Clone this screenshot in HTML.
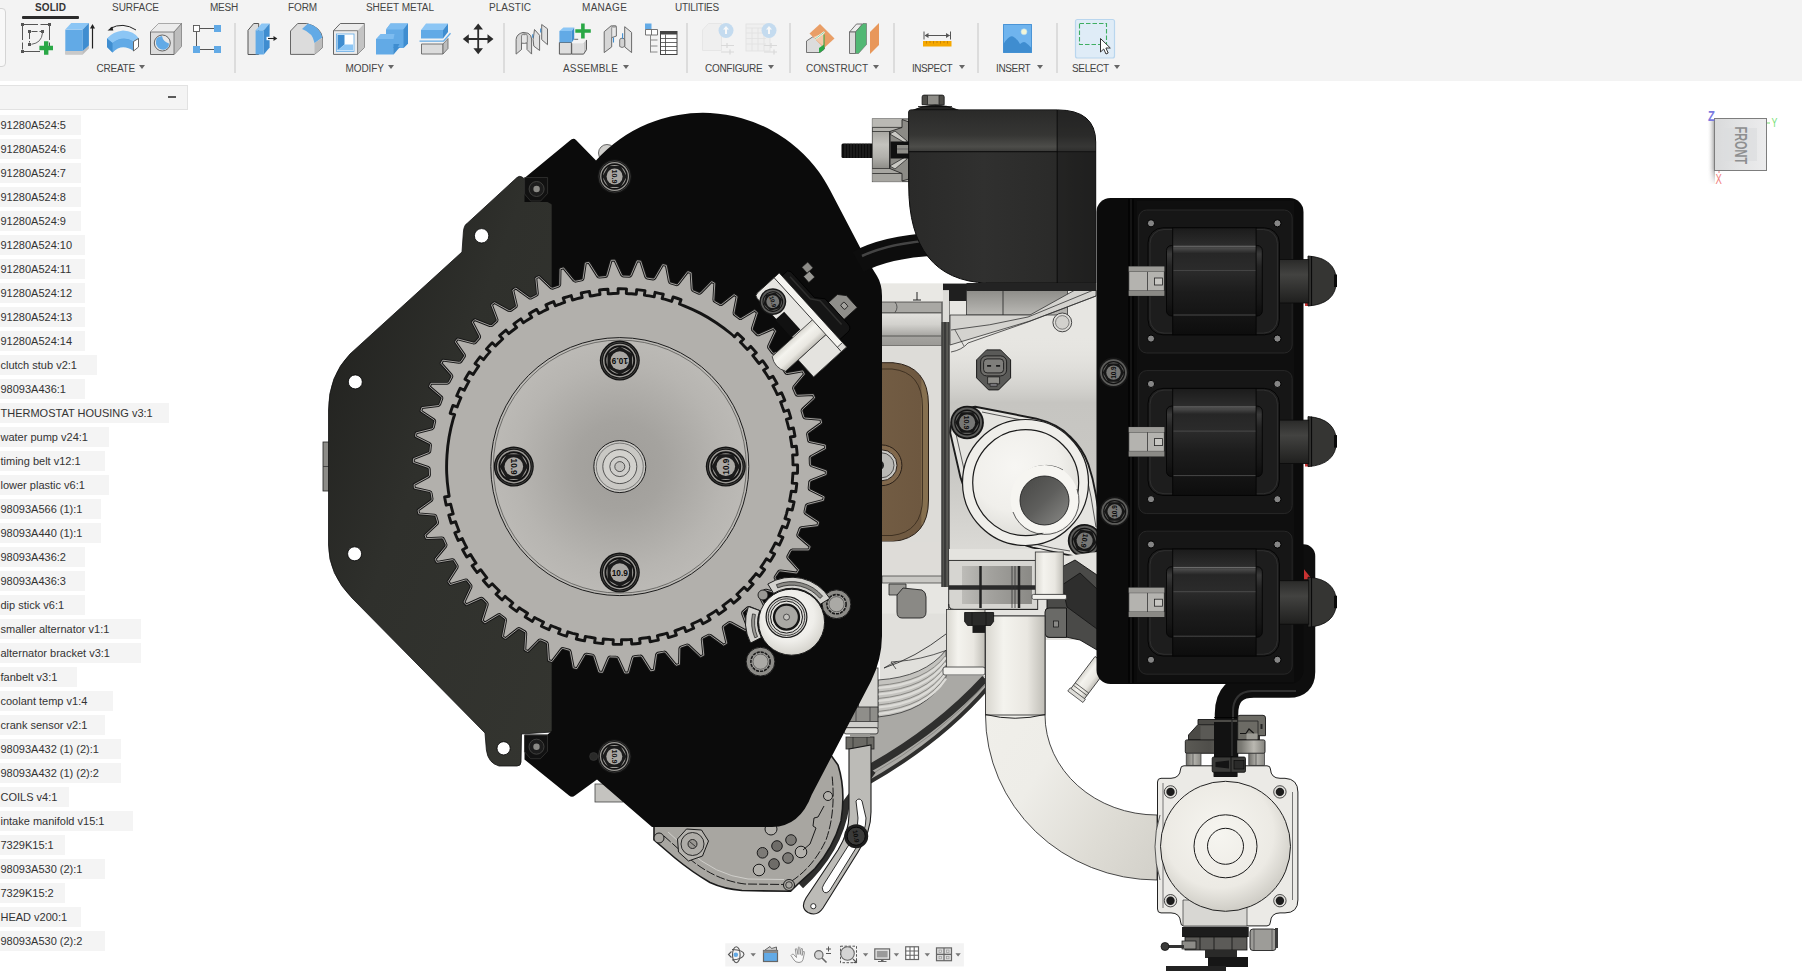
<!DOCTYPE html>
<html><head><meta charset="utf-8"><title>Fusion</title>
<style>
html,body{margin:0;padding:0;background:#fff;overflow:hidden}
body{width:1802px;height:971px;position:relative;font-family:"Liberation Sans",Arial,sans-serif;color:#333}
#tb{position:absolute;left:0;top:0;width:1802px;height:81px;background:#f3f3f3}
.tab{position:absolute;top:2px;height:12px;line-height:12px;font-size:10px;color:#444;white-space:nowrap;transform-origin:0 0}
.grp{position:absolute;top:63px;height:12px;line-height:12px;font-size:10px;color:#444;white-space:nowrap;transform-origin:0 0}
.car{position:absolute;top:65px;width:0;height:0;border-left:3px solid transparent;border-right:3px solid transparent;border-top:4px solid #666}
.sep{position:absolute;top:23px;width:2px;height:50px;background:#dcdcdc;margin-left:-1px}
#ph{position:absolute;left:-1px;top:85px;width:187px;height:23px;background:#f4f4f4;border:1px solid #e2e2e2;box-sizing:content-box}
.it{position:absolute;left:0;height:20px;background:#f4f4f4;font-size:11px;line-height:20px;color:#333;white-space:nowrap;overflow:hidden;padding-left:0px}
.it span{position:relative;left:0.5px}
#eng{position:absolute;left:0;top:0}
</style></head><body>
<div id="tb">

<div class="tab" style="left:35px;letter-spacing:0.097px;font-weight:bold;color:#333;">SOLID</div>
<div class="tab" style="left:112px;letter-spacing:-0.035px;">SURFACE</div>
<div class="tab" style="left:210px;letter-spacing:-0.256px;">MESH</div>
<div class="tab" style="left:288px;letter-spacing:-0.128px;">FORM</div>
<div class="tab" style="left:366px;letter-spacing:-0.052px;">SHEET METAL</div>
<div class="tab" style="left:489px;letter-spacing:0.048px;">PLASTIC</div>
<div class="tab" style="left:582px;letter-spacing:0.3px;">MANAGE</div>
<div class="tab" style="left:675px;letter-spacing:-0.316px;">UTILITIES</div>
<div style="position:absolute;left:22px;top:16px;width:57px;height:3px;background:#2b2b2b;border-radius:1px"></div>
<div style="position:absolute;left:-6px;top:8px;width:10px;height:57px;border:1px solid #d4d4d4;border-radius:4px;background:#f8f8f8"></div>
<div class="grp" style="left:96.5px;letter-spacing:-0.24px">CREATE</div><div class="car" style="left:139px"></div>
<div class="grp" style="left:345.5px;letter-spacing:-0.072px">MODIFY</div><div class="car" style="left:388px"></div>
<div class="grp" style="left:563px;letter-spacing:0.145px">ASSEMBLE</div><div class="car" style="left:622.5px"></div>
<div class="grp" style="left:705px;letter-spacing:-0.294px">CONFIGURE</div><div class="car" style="left:768px"></div>
<div class="grp" style="left:806px;letter-spacing:-0.092px">CONSTRUCT</div><div class="car" style="left:872.5px"></div>
<div class="grp" style="left:912px;letter-spacing:-0.439px">INSPECT</div><div class="car" style="left:958.5px"></div>
<div class="grp" style="left:996px;letter-spacing:-0.365px">INSERT</div><div class="car" style="left:1037px"></div>
<div class="grp" style="left:1072px;letter-spacing:-0.348px">SELECT</div><div class="car" style="left:1114px"></div>
<div class="sep" style="left:235px"></div>
<div class="sep" style="left:504px"></div>
<div class="sep" style="left:687px"></div>
<div class="sep" style="left:790px"></div>
<div class="sep" style="left:894px"></div>
<div class="sep" style="left:978px"></div>
<div class="sep" style="left:1057px"></div>
<svg id="ic" width="1802" height="81" viewBox="0 0 1802 81" style="position:absolute;left:0;top:0">
<defs>
<g id="plus"><path d="M-2.2,-6.8h4.4v4.6h4.6v4.4h-4.6v4.6h-4.4v-4.6h-4.6v-4.4h4.6z" fill="#2aa846"/></g>
</defs>
<!-- sketch -->
<g fill="none" stroke="#555" stroke-width="1">
<path d="M22.5,26v23.5M24,24.5h24M49.5,26v20" stroke-dasharray="14 2.5"/>
<path d="M24,51.5h16"/>
<path d="M29.5,33v9.5M31.5,31.5h9.5" stroke-dasharray="6 2"/>
<path d="M42.5,33 Q41.5,43 31.5,44.3" stroke="#666"/>
</g>
<g fill="#555"><rect x="21" y="23" width="3" height="3"/><rect x="48" y="23" width="3" height="3"/><rect x="21" y="50" width="3" height="3"/>
<rect x="28" y="30" width="3" height="3"/><rect x="41" y="30" width="3" height="3"/><rect x="28" y="43" width="3" height="3"/></g>
<use href="#plus" x="46.2" y="48"/>
<!-- extrude -->
<path d="M65.3,51h17.5l6.1-5.5v3l-6.1,5.9h-17.5z" fill="#bdbdbd"/>
<path d="M65.3,51v3.4h17.5v-3.4z" fill="#c9c9c9"/>
<path d="M65.3,29.6h17.5v21.4h-17.5z" fill="#62aae6"/>
<path d="M65.3,29.6l5.9-6.5h17.7l-6.1,6.5z" fill="#8cc6f5"/>
<path d="M82.8,29.6l6.1-6.5v22.4l-6.1,5.5z" fill="#3f8dd0"/>
<path d="M92.5,48.5v-22" stroke="#222" stroke-width="1.2"/><path d="M90,28.5l2.5-4.5l2.5,4.5z" fill="#222"/>
<!-- revolve -->
<path d="M107,38.5 Q122,28 139,38.5 L139,46 Q122,37 112.5,52.5 L107,47z" fill="#5aa3e0"/>
<path d="M107,38.5 Q113,31.5 123,30.5 Q134,31 139,38.5 L133.5,41.5 Q123,35 112.5,43z" fill="#8cc6f5"/>
<path d="M112.5,43 Q122,36 133.5,41.5 L133.5,51 Q122,43 112.5,52.5z" fill="#62aae6"/>
<path d="M107,38.5l5.5,4.5v9.5l-5.5-5.5z" fill="#3f8dd0"/>
<path d="M133.5,41.5l5-3v8.5l-5,4z" fill="#fff" stroke="#555" stroke-width="0.9"/>
<path d="M110,28.5 Q123,21.5 136,30" fill="none" stroke="#222" stroke-width="1"/><path d="M107.5,30.5l4.8-4l1,4z" fill="#222"/>
<!-- hole -->
<path d="M150.5,32l8-8.5h23v23l-7.5,8h-23.5z" fill="#dcdcdc" stroke="#666" stroke-width="1"/>
<path d="M174,32l7.5-8.5v23l-7.5,8z" fill="#bdbdbd"/>
<path d="M150.5,32l8-8.5h23l-7.5,8.5z" fill="#ececec"/>
<path d="M150.5,32h23.5v22.5M174,32l7.5-8.5" fill="none" stroke="#666" stroke-width="0.8"/>
<circle cx="162.3" cy="43" r="8" fill="#e8e8e8" stroke="#555" stroke-width="0.9"/>
<path d="M156.5,38.5 Q159,36 162,36 Q163,41.5 169,43.5 Q169,48 165,49.5 Q158,50.5 156,44 Q155.8,41 156.5,38.5z" fill="#62aae6"/>
<!-- pattern -->
<g stroke="#555" stroke-width="1" fill="none"><path d="M200,28.5h14M196.5,32v14M200,49.5h14"/></g>
<rect x="193.5" y="25.5" width="6" height="6" fill="#fff" stroke="#555" stroke-width="0.9"/>
<rect x="214" y="25" width="7" height="7" fill="#62aae6"/><rect x="193" y="46" width="7" height="7" fill="#62aae6"/><rect x="214" y="46" width="7" height="7" fill="#62aae6"/>
<!-- press pull -->
<path d="M248,30.3l5.7-6.8h5v31h-10.7z" fill="#dcdcdc" stroke="#555" stroke-width="1"/>
<path d="M255.6,30.3h8.2v24.1h-8.2z" fill="#62aae6"/>
<path d="M255.6,30.3l6-6.8h8l-5.8,6.8z" fill="#8cc6f5"/>
<path d="M263.8,30.3l5.8-6.8v24.1l-5.8,6.8z" fill="#3f8dd0"/>
<rect x="266.5" y="36.8" width="4" height="3.4" fill="#fff"/>
<path d="M268,38.5h6" stroke="#222" stroke-width="1.1"/><path d="M273.5,36l3.8,2.5l-3.8,2.5z" fill="#222"/>
<!-- fillet -->
<path d="M290.5,31l7.2-7.5h9 Q321,27 322.5,38v9.6l-8,6.8h-24z" fill="#dcdcdc" stroke="#666" stroke-width="1"/>
<path d="M314.5,43l8-5v9.6l-8,6.8z" fill="#bdbdbd"/>
<path d="M302,29 l6-5.5 Q320,27 322.3,37.5 L314.5,43 Q313,33 302,29z" fill="#62aae6"/>
<!-- shell -->
<path d="M333.5,30.7l6.8-7.2h24.1v24.1l-6.8,6.8h-24.1z" fill="#ececec" stroke="#666" stroke-width="1"/>
<path d="M357.6,30.7l6.8-7.2v24.1l-6.8,6.8z" fill="#c4c4c4"/>
<path d="M333.5,30.7h24.1v23.7" fill="none" stroke="#666" stroke-width="0.8"/>
<rect x="336.5" y="34" width="17.5" height="17.5" fill="#fff" stroke="#62aae6" stroke-width="0.8"/>
<path d="M337.5,35h7v9.5l-7,6z" fill="#3f8dd0"/><path d="M344.5,44.5h8.5v6h-15.5z" fill="#8cc6f5"/>
<!-- combine -->
<path d="M386,29.5l4.5-6h17.5v20l-4.5,4.5h-17.5z" fill="#62aae6"/>
<path d="M386,29.5l4.5-6h17.5l-4.5,6z" fill="#7dbcf0"/><path d="M403.5,29.5l4.5-6v20l-4.5,4.5z" fill="#3f8dd0"/>
<path d="M376,39l4.5-5h14l-1,5z" fill="#7dbcf0"/>
<path d="M376,39h17.5v15.5h-17.5z" fill="#62aae6"/>
<path d="M393.5,44h6l-6,10.5z" fill="#3f8dd0"/><path d="M393.5,47h6.5l-6.5,7.5z" fill="#3f8dd0"/>
<!-- offset face -->
<path d="M421,30l5-6.5h22l-5,6.5z" fill="#8cc6f5"/><path d="M421,30h22v8.5h-22z" fill="#62aae6"/><path d="M443,30l5-6.5v8.5l-5,6.5z" fill="#3f8dd0"/>
<path d="M419.5,41.2h24l7-8" fill="none" stroke="#62aae6" stroke-width="1.3"/>
<path d="M421.5,44h21.5v10h-21.5z" fill="#dcdcdc" stroke="#666" stroke-width="0.9"/><path d="M443,44l5-5.5v10l-5,5.5z" fill="#bdbdbd" stroke="#666" stroke-width="0.8"/>
<!-- move -->
<path d="M478.2,26v26M465.5,39h25.5" stroke="#2b2b2b" stroke-width="1.8"/>
<path d="M478.2,23.5l4.8,6h-9.6zM478.2,54.3l4.8-6h-9.6zM462.8,39l6-4.8v9.6zM493.5,39l-6-4.8v9.6z" fill="#2b2b2b"/>
<!-- joint -->
<g stroke="#6a6a6a" stroke-width="1" stroke-linejoin="round">
<path d="M516.1,54.1V39.5Q516.5,34 523,32.4L528,33.2Q531.6,35 531.6,39V54.1L527,49.5V43H521.5V49.5Z" fill="#d6d6d6"/>
<path d="M521.5,49.5V36Q521.5,33.8 524.5,33.8Q527.3,33.8 527.3,36V42.5Q524.5,44 521.5,43" fill="#e6e6e6" stroke-width="0.8"/>
<path d="M533.1,39.6L534.5,29.5L539.6,35.3V50.5L533.8,46.1Z" fill="#e2e2e2"/>
<path d="M541.7,24.5L547.5,28.8V44.7L541.7,39.6Z" fill="#e2e2e2"/>
</g>
<ellipse cx="524.4" cy="34.6" rx="1.6" ry="0.6" fill="#888"/>
<path d="M532.7,34.2v3.6M540.7,28.6v3.8" stroke="#3f8dd0" stroke-width="1.1"/>
<!-- new component -->
<path d="M559.4,42.5h12v11.6h-12z" fill="#dedede" stroke="#5a5a5a" stroke-width="1"/>
<path d="M571.7,43.3L574.9,39.6L586.5,39.3L583.6,43.3Z" fill="#f4f4f4"/>
<path d="M583.6,43.3L586.5,39.3V49.7L583.6,54.1Z" fill="#c6c6c6"/>
<path d="M571.7,43.3H583.6V54.1H571.7Z" fill="#dedede"/>
<path d="M571.7,43.3V54.1H583.6L586.5,49.7V40" fill="none" stroke="#5a5a5a" stroke-width="1"/>
<path d="M559.4,31L563.4,27.4H574.2L571.7,31Z" fill="#8cc6f5"/>
<path d="M559.4,31H571.7V42.4H559.4Z" fill="#62aae6"/>
<path d="M571.7,31L574.2,27.4V38.9L571.7,42.4Z" fill="#3f8dd0"/>
<path d="M574.2,39.3h4" stroke="#5a5a5a" stroke-width="0.9"/>
<path d="M581.1,23.4h3.6v5.8h6.1v3.6h-6.1v5.8h-3.6v-5.8h-5.8v-3.6h5.8z" fill="#2aa846"/>
<!-- as-built joint -->
<g stroke="#6a6a6a" stroke-width="1" stroke-linejoin="round">
<path d="M604.2,52.6V31.7L611,25.9H616.1Q616.6,31 616.4,36L611.7,37.5V46.9Z" fill="#d6d6d6"/>
<path d="M611.7,37.5V28Q611.7,26 614,26Q616.2,26 616.3,28V36Z" fill="#e8e8e8" stroke-width="0.7"/>
<path d="M624.7,26.7L631.6,32.4V52.6L624.7,46.9Z" fill="#e2e2e2"/>
<path d="M619.7,40Q619.7,38.2 622.2,38.2Q624.7,38.2 624.7,40V46.5Q622,48.5 619.7,46.5Z" fill="#d2d2d2" stroke-width="0.9"/>
</g>
<ellipse cx="614" cy="27" rx="1.5" ry="0.6" fill="#888"/>
<path d="M613.5,37.5v5M622.6,33.2v5.5" stroke="#3f8dd0" stroke-width="1.1"/>
<!-- table -->
<rect x="645" y="23.5" width="6.5" height="6" fill="#62aae6"/>
<path d="M645.5,29.5h12v5.5h-12zM651.5,29.5v5.5" fill="#fff" stroke="#666" stroke-width="0.9"/>
<path d="M650.5,35v17.5M650.5,40h7M650.5,46h7M650.5,52h7" stroke="#888" stroke-width="1" fill="none"/>
<rect x="660.5" y="31.5" width="16.5" height="23" fill="#fff" stroke="#444" stroke-width="1"/>
<rect x="660.5" y="31.5" width="16.5" height="3" fill="#444"/>
<path d="M660.5,38.5h16.5M660.5,42.5h16.5M660.5,46.5h16.5M660.5,50.5h16.5M665.5,34.5v20" stroke="#444" stroke-width="0.8"/>
<!-- configure (faded) -->
<g opacity="0.45">
<path d="M702.5,30l6-6.5h13v27h-19z" fill="#ececec" stroke="#d0d0d0" stroke-width="0.8"/>
<circle cx="726" cy="30.5" r="7.5" fill="#8cc0ec"/><path d="M726,26l3,3.5h-2v4.5h-2v-4.5h-2z" fill="#fff"/>
<path d="M721,45.5h13M721,52h13M727,43v5M730,49.5v5" stroke="#bbb" stroke-width="1.2"/>
<rect x="746" y="24" width="24" height="27" fill="#ececec" stroke="#ccc" stroke-width="0.8"/>
<path d="M746,28h24M746,33h20M746,38.5h20M746,44h20M752,28v23M758,28v23M764,28v23" stroke="#ccc" stroke-width="0.8"/>
<circle cx="769" cy="30.5" r="7.5" fill="#8cc0ec"/><path d="M769,26l3,3.5h-2v4.5h-2v-4.5h-2z" fill="#fff"/>
<path d="M764,45.5h13M764,52h13M771,43v5M774,49.5v5" stroke="#bbb" stroke-width="1.2"/>
</g>
<!-- construct -->
<path d="M806.5,52.5v-11.5l6-4h6l6,5v7l-4.5,3.5z" fill="#dcdcdc" stroke="#666" stroke-width="0.9"/>
<path d="M809.5,33.5l10.5-9.5l14.5,14.5l-10.5,9.5z" fill="#e8975a" opacity="0.92"/>
<path d="M813,37l11-4v14z" fill="#f3c8a8"/>
<path d="M819,52.5l5-4v-14" fill="none" stroke="#2aa846" stroke-width="1"/><path d="M819,48l5-3.5v5l-5,3.5z" fill="#2aa846"/>
<path d="M815,39l9.5-7" stroke="#fff" stroke-width="1.6"/><path d="M815,39l9.5-7" stroke="#5cba78" stroke-width="0.7"/>
<path d="M849.5,32l7-8h6l-7,8z" fill="#ececec" stroke="#666" stroke-width="0.9"/>
<path d="M849.5,32h6v21.5h-6z" fill="#dcdcdc" stroke="#666" stroke-width="0.9"/>
<path d="M855.5,32l7.5-8.5h3.5v21l-8,9h-3z" fill="#52b874" stroke="#666" stroke-width="0.6"/>
<path d="M870,32l9-9v22l-9,9z" fill="#e8975a"/>
<!-- inspect -->
<path d="M924,31.5v8M950.5,31.5v8M925,35.5h24.5" stroke="#555" stroke-width="1" fill="none"/>
<path d="M924.5,35.5l4-2.5v5zM950,35.5l-4-2.5v5z" fill="#555"/>
<rect x="923" y="41" width="28.5" height="5.5" fill="#f5a800"/>
<path d="M926.5,41v2.5M930,41v2M933.5,41v2.5M937,41v2M940.5,41v2.5M944,41v2M947.5,41v2.5" stroke="#b87400" stroke-width="0.7"/>
<!-- insert -->
<rect x="1003" y="24" width="29" height="29" fill="#62aae6"/>
<path d="M1003.5,24.5h28v28h-28z" fill="#6fb4ee" stroke="#4a94d6" stroke-width="1"/>
<path d="M1003.5,44 Q1009,35 1013,36.5 Q1016.5,38 1020,44 Q1023.5,41 1025.5,42.5 Q1029,45 1031.5,48v4.5h-28z" fill="#3f8dd0"/>
<circle cx="1024" cy="31.8" r="3" fill="#f2f6d8" stroke="#b5d8f0" stroke-width="0.6"/>
<!-- select -->
<rect x="1075.5" y="19.5" width="39" height="38.5" rx="2" fill="#dfecf7" stroke="#b9d6ee" stroke-width="1.2"/>
<rect x="1079.5" y="23.5" width="27" height="21" fill="none" stroke="#3fae62" stroke-width="1.1" stroke-dasharray="4.5 2"/>
<path d="M1100.5,38.5v13.5l3.2-3l2.3,5l2.2-1l-2.3-5h4.4z" fill="#fff" stroke="#333" stroke-width="1"/>
</svg>

</div>
<div id="ph"><div style="position:absolute;left:168px;top:10px;width:8px;height:2px;background:#5a5a5a"></div></div>
<div class="it" style="top:115px;width:81px"><span>91280A524:5</span></div>
<div class="it" style="top:139px;width:81px"><span>91280A524:6</span></div>
<div class="it" style="top:163px;width:81px"><span>91280A524:7</span></div>
<div class="it" style="top:187px;width:81px"><span>91280A524:8</span></div>
<div class="it" style="top:211px;width:81px"><span>91280A524:9</span></div>
<div class="it" style="top:235px;width:85px"><span>91280A524:10</span></div>
<div class="it" style="top:259px;width:85px"><span>91280A524:11</span></div>
<div class="it" style="top:283px;width:85px"><span>91280A524:12</span></div>
<div class="it" style="top:307px;width:85px"><span>91280A524:13</span></div>
<div class="it" style="top:331px;width:85px"><span>91280A524:14</span></div>
<div class="it" style="top:355px;width:97px"><span>clutch stub v2:1</span></div>
<div class="it" style="top:379px;width:85px"><span>98093A436:1</span></div>
<div class="it" style="top:403px;width:169px"><span>THERMOSTAT HOUSING v3:1</span></div>
<div class="it" style="top:427px;width:109px"><span>water pump v24:1</span></div>
<div class="it" style="top:451px;width:105px"><span>timing belt v12:1</span></div>
<div class="it" style="top:475px;width:109px"><span>lower plastic v6:1</span></div>
<div class="it" style="top:499px;width:101px"><span>98093A566 (1):1</span></div>
<div class="it" style="top:523px;width:101px"><span>98093A440 (1):1</span></div>
<div class="it" style="top:547px;width:85px"><span>98093A436:2</span></div>
<div class="it" style="top:571px;width:85px"><span>98093A436:3</span></div>
<div class="it" style="top:595px;width:85px"><span>dip stick v6:1</span></div>
<div class="it" style="top:619px;width:141px"><span>smaller alternator v1:1</span></div>
<div class="it" style="top:643px;width:141px"><span>alternator bracket v3:1</span></div>
<div class="it" style="top:667px;width:77px"><span>fanbelt v3:1</span></div>
<div class="it" style="top:691px;width:113px"><span>coolant temp v1:4</span></div>
<div class="it" style="top:715px;width:105px"><span>crank sensor v2:1</span></div>
<div class="it" style="top:739px;width:121px"><span>98093A432 (1) (2):1</span></div>
<div class="it" style="top:763px;width:121px"><span>98093A432 (1) (2):2</span></div>
<div class="it" style="top:787px;width:69px"><span>COILS v4:1</span></div>
<div class="it" style="top:811px;width:133px"><span>intake manifold v15:1</span></div>
<div class="it" style="top:835px;width:65px"><span>7329K15:1</span></div>
<div class="it" style="top:859px;width:105px"><span>98093A530 (2):1</span></div>
<div class="it" style="top:883px;width:65px"><span>7329K15:2</span></div>
<div class="it" style="top:907px;width:81px"><span>HEAD v200:1</span></div>
<div class="it" style="top:931px;width:105px"><span>98093A530 (2):2</span></div>
<svg id="eng" width="1802" height="971" viewBox="0 0 1802 971" style="position:absolute;left:0;top:0">
<defs>
<linearGradient id="gPlate" x1="0" y1="0" x2="1" y2="1"><stop offset="0" stop-color="#1d1d1b"/><stop offset="0.45" stop-color="#2f302c"/><stop offset="1" stop-color="#343530"/></linearGradient>
<radialGradient id="gDisc" cx="0.5" cy="0.5" r="0.5"><stop offset="0" stop-color="#9f9d99"/><stop offset="0.35" stop-color="#a5a39f"/><stop offset="0.8" stop-color="#b7b5b1"/><stop offset="1" stop-color="#bcbab6"/></radialGradient>
<linearGradient id="gAir" x1="0" y1="0" x2="1" y2="0"><stop offset="0" stop-color="#2a2a29"/><stop offset="0.4" stop-color="#30302f"/><stop offset="0.75" stop-color="#2b2b2a"/><stop offset="1" stop-color="#222221"/></linearGradient>
<linearGradient id="gCoil" x1="0" y1="0" x2="0" y2="1"><stop offset="0" stop-color="#1a1a1a"/><stop offset="0.12" stop-color="#3a3a3a"/><stop offset="0.3" stop-color="#232323"/><stop offset="0.8" stop-color="#161616"/><stop offset="1" stop-color="#0c0c0c"/></linearGradient>
<linearGradient id="gPipeV" x1="0" y1="0" x2="1" y2="0"><stop offset="0" stop-color="#d8d6cf"/><stop offset="0.3" stop-color="#f4f3ee"/><stop offset="0.7" stop-color="#e9e7e1"/><stop offset="1" stop-color="#bfbdb6"/></linearGradient>
<radialGradient id="gSph" cx="0.45" cy="0.4" r="0.6"><stop offset="0" stop-color="#f6f5f0"/><stop offset="0.7" stop-color="#eceae4"/><stop offset="1" stop-color="#cfcdc6"/></radialGradient>
<linearGradient id="gAirTop" x1="0" y1="0" x2="0" y2="1"><stop offset="0" stop-color="#2a2a29"/><stop offset="0.6" stop-color="#363634"/><stop offset="0.88" stop-color="#4d4d4a"/><stop offset="1" stop-color="#3a3a38"/></linearGradient>
<linearGradient id="gPlug" x1="0" y1="0" x2="0" y2="1"><stop offset="0" stop-color="#2a2a29"/><stop offset="0.35" stop-color="#434341"/><stop offset="1" stop-color="#1f1f1e"/></linearGradient>
<linearGradient id="gCoil2" x1="0" y1="0" x2="0" y2="1"><stop offset="0" stop-color="#1b1b1b"/><stop offset="0.16" stop-color="#2c2c2c"/><stop offset="0.19" stop-color="#4a4a4a"/><stop offset="0.24" stop-color="#262626"/><stop offset="0.4" stop-color="#2b2b2b"/><stop offset="0.6" stop-color="#1c1c1c"/><stop offset="0.82" stop-color="#141414"/><stop offset="1" stop-color="#0d0d0d"/></linearGradient>
<linearGradient id="gBand" x1="0" y1="0" x2="0" y2="1"><stop offset="0" stop-color="#e3e2de"/><stop offset="0.35" stop-color="#d2d1cd"/><stop offset="0.7" stop-color="#a5a4a0"/><stop offset="1" stop-color="#9a9995"/></linearGradient>
<linearGradient id="gBrown" x1="0" y1="0" x2="1" y2="0"><stop offset="0" stop-color="#725c43"/><stop offset="0.84" stop-color="#6e5840"/><stop offset="0.86" stop-color="#86704f"/><stop offset="1" stop-color="#86704f"/></linearGradient>
<linearGradient id="gPed" x1="0" y1="0" x2="0" y2="1"><stop offset="0" stop-color="#8d8c88"/><stop offset="1" stop-color="#bab9b5"/></linearGradient>
<radialGradient id="gDome" cx="0.4" cy="0.35" r="0.7"><stop offset="0" stop-color="#f7f6f3"/><stop offset="0.6" stop-color="#f0efeb"/><stop offset="1" stop-color="#dcdbd6"/></radialGradient>
<linearGradient id="gHole" x1="0" y1="0" x2="1" y2="1"><stop offset="0" stop-color="#474745"/><stop offset="0.5" stop-color="#5e5e5c"/><stop offset="1" stop-color="#8a8a87"/></linearGradient>
<linearGradient id="gBrk" x1="0" y1="0" x2="1" y2="0"><stop offset="0" stop-color="#bdbcb8"/><stop offset="0.4" stop-color="#a3a29e"/><stop offset="1" stop-color="#8a8985"/></linearGradient>
<linearGradient id="gPipeH" x1="0" y1="0" x2="0" y2="1"><stop offset="0" stop-color="#d8d6cf"/><stop offset="0.3" stop-color="#f4f3ee"/><stop offset="0.7" stop-color="#e9e7e1"/><stop offset="1" stop-color="#bfbdb6"/></linearGradient>
<linearGradient id="gPipeE" x1="0" y1="0" x2="1" y2="1"><stop offset="0" stop-color="#f1f0eb"/><stop offset="0.45" stop-color="#eeede8"/><stop offset="0.75" stop-color="#dedcd5"/><stop offset="1" stop-color="#d2d0c9"/></linearGradient>
<radialGradient id="gIdl" cx="0.45" cy="0.4" r="0.65"><stop offset="0" stop-color="#f8f7f3"/><stop offset="0.6" stop-color="#efeeea"/><stop offset="1" stop-color="#cfcdc6"/></radialGradient>
<linearGradient id="gConn" x1="0" y1="0" x2="0" y2="1"><stop offset="0" stop-color="#a9a8a3"/><stop offset="0.35" stop-color="#c4c3be"/><stop offset="0.7" stop-color="#b1b0ab"/><stop offset="1" stop-color="#8f8e89"/></linearGradient>
<linearGradient id="gFl" x1="0" y1="0" x2="1" y2="0"><stop offset="0" stop-color="#5b5a55"/><stop offset="0.3" stop-color="#4f4e4a"/><stop offset="0.7" stop-color="#7a7973"/><stop offset="0.86" stop-color="#bab8b1"/><stop offset="1" stop-color="#85847e"/></linearGradient>
<linearGradient id="gStd" x1="0" y1="0" x2="1" y2="0"><stop offset="0" stop-color="#6e6d68"/><stop offset="0.5" stop-color="#b5b4ae"/><stop offset="1" stop-color="#8a8984"/></linearGradient>
<linearGradient id="gFace" x1="0" y1="0" x2="0" y2="1"><stop offset="0" stop-color="#e7e6e2" stop-opacity="0"/><stop offset="0.3" stop-color="#c6c5c1"/><stop offset="0.6" stop-color="#c9c8c4"/><stop offset="1" stop-color="#dddcd8"/></linearGradient>
<g id="bolt"><circle r="20" fill="#121212"/><circle r="18.3" fill="none" stroke="#5a5a58" stroke-width="0.6"/><circle r="16.8" fill="#9b9995"/><circle r="14.4" fill="#9b9995" stroke="#121212" stroke-width="1.9"/><path d="M0,-14.2L12.3,-7.1L12.3,7.1L0,14.2L-12.3,7.1L-12.3,-7.1Z" fill="#1b1b1b"/><circle r="9.3" fill="#aaa8a4"/><text x="0" y="3" font-family="Liberation Sans,Arial,sans-serif" font-weight="bold" font-size="8.3" text-anchor="middle" fill="#0c0c0c">10.9</text></g>
<g id="dbolt"><circle r="20" fill="#161616"/><circle r="17.8" fill="#5c5c5a"/><circle r="14.6" fill="#5c5c5a" stroke="#121212" stroke-width="1.6"/><path d="M0,-14.2L12.3,-7.1L12.3,7.1L0,14.2L-12.3,7.1L-12.3,-7.1Z" fill="#161616"/><circle r="9.6" fill="#777775"/><text x="0" y="3.1" font-family="Liberation Sans,Arial,sans-serif" font-weight="bold" font-size="8.6" text-anchor="middle" fill="#0a0a0a">10.9</text></g>
<g id="sbolt"><circle r="13" fill="#121212"/><circle r="10.6" fill="#8f8d89" stroke="#121212" stroke-width="1.5"/><path d="M0,-10L8.7,-5L8.7,5L0,10L-8.7,5L-8.7,-5Z" fill="#1b1b1b"/><circle r="6.5" fill="#a3a19d"/><text x="0" y="2.2" font-family="Liberation Sans,Arial,sans-serif" font-weight="bold" font-size="6" text-anchor="middle" fill="#0c0c0c">10.9</text></g>
</defs>
<g id="body">
<rect x="880" y="560" width="110" height="120" fill="#e1e0dc"/>
<path d="M945,676 L985,676 Q938,731 868,770 L868,716Z" fill="#aaa9a5"/>
<path d="M987,682 Q939.5,735.5 868,776" fill="none" stroke="#aaa9a5" stroke-width="13"/>
<path d="M946,650 Q925,677 878,680 L878,717 Q928,712 946,677Z" fill="#c4c3bf" stroke="#333" stroke-width="0.8"/>
<path d="M946,655 Q926,682 878,685.5" fill="none" stroke="#8a8985" stroke-width="1"/>
<path d="M946,657.5 Q926,684.5 878,688" fill="none" stroke="#dddcd8" stroke-width="2.2"/>
<path d="M946,660.3 Q926,688.2 878,692" fill="none" stroke="#8a8985" stroke-width="1"/>
<path d="M946,662.8 Q926,690.7 878,694.5" fill="none" stroke="#dddcd8" stroke-width="2.2"/>
<path d="M946,665.5 Q926,694.4 878,698.5" fill="none" stroke="#8a8985" stroke-width="1"/>
<path d="M946,668 Q926,696.9 878,701" fill="none" stroke="#dddcd8" stroke-width="2.2"/>
<path d="M946,670.8 Q926,700.6 878,705" fill="none" stroke="#8a8985" stroke-width="1"/>
<path d="M946,673.3 Q926,703.1 878,707.5" fill="none" stroke="#dddcd8" stroke-width="2.2"/>
<path d="M946,676.1 Q926,706.8 878,711.5" fill="none" stroke="#8a8985" stroke-width="1"/>
<path d="M946,678.6 Q926,709.3 878,714" fill="none" stroke="#dddcd8" stroke-width="2.2"/>
<path d="M880,600 L946,600 L946,634 Q915,658 884,668 L880,668Z" fill="#e1e0dc"/>
<path d="M946,634 Q915,658 884,668" fill="none" stroke="#333" stroke-width="0.9"/>
<path d="M946,650.5 Q920,660 897,661.5 L891,662 L896,669" fill="none" stroke="#333" stroke-width="0.8"/>
<path d="M884,668 Q890,664 897,661.5" fill="none" stroke="#333" stroke-width="0.8"/>
<path d="M985,678.5 Q937,730.5 868,769" fill="none" stroke="#2f2f2e" stroke-width="7.5"/>
<path d="M989,686 Q942,741 868,783" fill="none" stroke="#2f2f2e" stroke-width="4"/>
<path d="M987.5,682.5 Q939.5,736 868,776.5" fill="none" stroke="#8a8985" stroke-width="1"/>
<rect x="881" y="283.6" width="216" height="330" fill="#e7e6e2"/>
<rect x="949.5" y="335" width="147.5" height="225" fill="url(#gFace)"/>
<rect x="881" y="283.6" width="62" height="19" fill="#e9e8e4"/>
<rect x="881" y="302" width="62" height="11" fill="#a9a8a4" stroke="#333" stroke-width="0.7"/>
<path d="M895,302 Q899,307 895,312.5" fill="none" stroke="#333" stroke-width="0.7"/>
<rect x="881" y="313" width="62" height="33" fill="url(#gBand)"/>
<path d="M881,313H943M881,336H941M881,346H943" stroke="#3a3a38" stroke-width="0.7"/>
<rect x="881" y="346" width="62" height="230" fill="#dddcd8"/>
<path d="M917,292v8M913,300h8" stroke="#222" stroke-width="1"/>
<path d="M881,362.7 L893,362.7 Q928.5,366 928.5,405 L928.5,500 Q928.5,538 893,541.5 L881,541.5Z" fill="url(#gBrown)" stroke="#2a2018" stroke-width="1"/>
<path d="M881,369 L892,369 Q922.5,372 922.5,407 L922.5,498 Q922.5,532 892,535.5 L881,535.5" fill="none" stroke="#3a2c1e" stroke-width="0.9"/>
<circle cx="881.5" cy="465.3" r="20.4" fill="#82694d" stroke="#2a2018" stroke-width="1"/><circle cx="881.5" cy="465.3" r="15.5" fill="#c9c8c4" stroke="#2a2018" stroke-width="1"/><circle cx="881.5" cy="465.3" r="12.5" fill="#b9b8b4" stroke="#333" stroke-width="0.8"/><circle cx="879" cy="465.3" r="5" fill="#222"/>
<path d="M881,541.5V576H943V541.5" fill="#dedcd8"/>
<path d="M882,576h62v7h-62z" fill="#c9c8c4" stroke="#333" stroke-width="0.7"/>
<path d="M889,584h17v11h-17z" fill="#9a9995" stroke="#222" stroke-width="0.8"/>
<path d="M897,595 L903,588 L922,590 Q926,592 926,597 L926,612 Q926,618 920,618 L902,618 Q897,618 897,612Z" fill="#8a8985" stroke="#222" stroke-width="0.9"/>
<rect x="941.5" y="322" width="8" height="265" fill="#5a5a56"/><rect x="941.5" y="302" width="8" height="20" fill="#cfcecb"/>
<path d="M942,302V587M949,296V560" stroke="#2a2a2a" stroke-width="1"/><path d="M945,322V587" stroke="#3a3a39" stroke-width="2.4"/>
<rect x="943" y="286" width="6" height="36" fill="#dddcd8"/>
<rect x="943" y="283.6" width="153" height="6.5" fill="#1f1f1f"/>
<rect x="949" y="290" width="17.5" height="11" fill="#1f1f1f"/>
<rect x="966.4" y="290" width="101" height="25" fill="url(#gPed)" stroke="#222" stroke-width="0.7"/>
<path d="M1003,290v25" stroke="#222" stroke-width="0.8"/>
<path d="M966.4,315 L1030,315 L1075,290 L1096,290 L1096,296 L1030,321 L950,345 L950,315Z" fill="#d4d3cf" stroke="#333" stroke-width="0.8"/>
<path d="M951,330 Q990,326 1028,317 L1096,289" fill="none" stroke="#333" stroke-width="0.8"/>
<path d="M951,352 Q962,350 968,343 L1028,322 L1096,296" fill="none" stroke="#333" stroke-width="0.8"/>
<path d="M955,330 L964,346" stroke="#333" stroke-width="0.7"/>
<circle cx="1062.3" cy="322.4" r="9.4" fill="#deddd9" stroke="#333" stroke-width="0.9"/><circle cx="1062.3" cy="322.4" r="6.8" fill="#d2d1cd" stroke="#555" stroke-width="0.7"/>
<g transform="translate(993.6,368.9)">
<path d="M-7,-19 H7 L17,-9 V9 L5,21 H-5 L-17,9 V-9Z" fill="#5a5a58" stroke="#1a1a1a" stroke-width="1"/>
<rect x="-13" y="-13" width="26" height="20" rx="6" fill="#6e6d6a" stroke="#1a1a1a" stroke-width="0.9"/>
<rect x="-10" y="-10" width="20" height="14" rx="3.5" fill="#7f7e7b" stroke="#1a1a1a" stroke-width="0.9"/>
<path d="M-6.5,-3h4M2.5,-3h4" stroke="#1a1a1a" stroke-width="1.6"/>
<path d="M-6,8h12v7h-12z" fill="#8f8e8a" stroke="#1a1a1a" stroke-width="0.8"/><path d="M-3.5,14.5h7v3h-7z" fill="#77767a" stroke="#1a1a1a" stroke-width="0.6"/>
</g>
<path d="M950.2,432.6 Q951,409 975.2,406.7 L1036.4,418.7 Q1058,424 1069.8,436.3 Q1083,449 1088.3,464.2 Q1093,478 1095.7,493.8 L1101.3,527.2 L1101.3,552 L1077.2,556.9 L1032.7,547.6 Q1017,543 1004.9,536.5 Q988,526 977.1,510.5 Q966,495 960.4,477.1 Z" fill="#e5e4e0" stroke="#1c1c1c" stroke-width="1.9" stroke-linejoin="round"/>
<path d="M956,434 L966,478 Q980,520 1012,536 Q1035,546 1070,551" fill="none" stroke="#333" stroke-width="0.8"/>
<path d="M982,412 L1034,422.5 Q1060,430 1074,450 Q1086,468 1091,497 L1096,527" fill="none" stroke="#333" stroke-width="0.8"/>
<circle cx="1025.5" cy="482.5" r="63" fill="#efeeea" stroke="#1c1c1c" stroke-width="1.2"/>
<circle cx="1025.7" cy="482.7" r="53" fill="url(#gDome)" stroke="#1c1c1c" stroke-width="1.2"/>
<path d="M1012,497 A34,34 0 0 1 1063,470" fill="none" stroke="#333" stroke-width="0.8"/>
<circle cx="1044.5" cy="499" r="34" fill="#f6f5f1"/>
<path d="M1013,512 A34,34 0 0 0 1077,489" fill="none" stroke="#333" stroke-width="0.8"/>
<circle cx="1044.5" cy="500.5" r="24.5" fill="url(#gHole)" stroke="#222" stroke-width="0.9"/>
<use href="#dbolt" transform="translate(967.1,422.5) rotate(90) scale(0.84)"/>
<use href="#dbolt" transform="translate(1084.6,540.7) rotate(100) scale(0.84)"/>
<path d="M949,549 L1040,549 L1066,556 L1097,552 L1097,640 L949,640Z" fill="#e4e3df"/>
<path d="M1047,575 L1075,560 L1097,575 L1097,650 L1080,640 L1066,637 L1047,637Z" fill="#4a4a48" stroke="#111" stroke-width="0.9"/>
<path d="M1062,585 l18,-12 l17,16 v40 l-30,-22z" fill="#2e2e2d" stroke="#111" stroke-width="0.8"/>
<path d="M1045,612 Q1045,608 1049,608 L1066.5,608 L1066.5,637.4 L1049,637.4 Q1045,637 1045,633Z" fill="#6a6a67" stroke="#111" stroke-width="0.9"/>
<rect x="1053.5" y="621" width="5" height="6" fill="#8a8a87" stroke="#111" stroke-width="0.7"/>
<rect x="948.7" y="560.4" width="89" height="49" fill="#d6d5d1" stroke="#222" stroke-width="0.9"/>
<rect x="962" y="566" width="70" height="38" fill="url(#gBrk)"/>
<path d="M948.7,587.5h89" stroke="#2a2a2a" stroke-width="4.5"/>
<path d="M980.5,566v42" stroke="#222" stroke-width="2.5"/><path d="M1019,566v42" stroke="#222" stroke-width="2.5"/><path d="M1012,566v42M1015,566v42" stroke="#333" stroke-width="0.8"/>
<path d="M948.7,604 Q948.7,609.4 954,609.4 L1037.5,609.4" fill="none" stroke="#222" stroke-width="1"/>
<rect x="946.5" y="609.5" width="38.5" height="58" fill="url(#gPipeV)" stroke="#333" stroke-width="0.8"/>
<rect x="943" y="667" width="42" height="8" rx="2" fill="#f1f0ec" stroke="#333" stroke-width="0.8"/>
<rect x="1035.3" y="552" width="28" height="43" fill="url(#gPipeV)" stroke="#333" stroke-width="0.8"/>
<rect x="1032" y="594.4" width="34.5" height="5" rx="1.5" fill="#f3f2ee" stroke="#333" stroke-width="0.8"/>
<g transform="translate(1088,680) rotate(-53)"><rect x="-19" y="-8.5" width="42" height="17" fill="url(#gPipeH)" stroke="#333" stroke-width="0.8"/><path d="M-13,-8.5v17M-10,-8.5v17" stroke="#333" stroke-width="0.7"/><rect x="-21" y="-9.5" width="4" height="19" fill="#deddd8" stroke="#333" stroke-width="0.7"/></g>
</g>
<g id="alt">
<path d="M872,770 L845,806 Q838,850 800,885" fill="none" stroke="#2e2e2d" stroke-width="9"/>
<path d="M654,820 L654,840 L675,858 Q692,872 710,882.5 Q724,889 742,890.5 L790.6,891.3 L798,884 L815,868.5 Q833,848 841,821 Q846,790 838,765 L820,740 L700,760Z" fill="#a8a6a1" stroke="#1a1a1a" stroke-width="1.6"/>
<path d="M664,836 L683,853 Q712,880 745,884 L786,884.5 Q812,870 826,840 Q836,812 832,775" fill="none" stroke="#1a1a1a" stroke-width="1" stroke-dasharray="9 2"/>
<path d="M668,832 L688,850 Q715,875 748,879 L784,879.5" fill="none" stroke="#d0cfcb" stroke-width="1"/>
<circle cx="659" cy="838" r="5" fill="#a8a6a1" stroke="#1a1a1a" stroke-width="1"/><circle cx="789" cy="885" r="5.5" fill="#a8a6a1" stroke="#1a1a1a" stroke-width="1"/><circle cx="789" cy="885" r="3.3" fill="none" stroke="#1a1a1a" stroke-width="0.8"/>
<g transform="translate(692.5,844)"><path d="M-15,-5 L-6,-15 L9,-14 L16,-3 L10,12 L-4,17 L-14,8Z" fill="#b5b3ae" stroke="#1a1a1a" stroke-width="1"/><circle r="11.5" fill="#aeaca7" stroke="#1a1a1a" stroke-width="0.9"/><circle r="4.5" fill="#9a9893" stroke="#1a1a1a" stroke-width="0.9"/><path d="M-3,-2.5l6,5" stroke="#1a1a1a" stroke-width="0.8"/></g>
<circle cx="762.5" cy="852.8" r="5.3" fill="#7c7a76" stroke="#1a1a1a" stroke-width="1"/>
<circle cx="777" cy="846" r="5.3" fill="#6e6c68" stroke="#1a1a1a" stroke-width="1"/>
<circle cx="791" cy="840" r="5.3" fill="#7c7a76" stroke="#1a1a1a" stroke-width="1"/>
<circle cx="759" cy="870" r="5.8" fill="#b3b1ac" stroke="#1a1a1a" stroke-width="1"/>
<circle cx="774" cy="864" r="5.3" fill="#6e6c68" stroke="#1a1a1a" stroke-width="1"/>
<circle cx="788" cy="858" r="5.3" fill="#7c7a76" stroke="#1a1a1a" stroke-width="1"/>
<circle cx="801" cy="852" r="5.8" fill="#b3b1ac" stroke="#1a1a1a" stroke-width="1"/>
<circle cx="828" cy="796" r="4.5" fill="#b3b1ac" stroke="#1a1a1a" stroke-width="1"/>
<circle cx="771" cy="829" r="6" fill="#b3b1ac" stroke="#1a1a1a" stroke-width="1"/>
<path d="M824,806 L818,817 L814,818 L813,826 L816,828 L810,844 L803,850" fill="none" stroke="#1a1a1a" stroke-width="1"/>
<rect x="858.5" y="668" width="19.5" height="40" fill="#d6d5d1" stroke="#333" stroke-width="0.8"/>
<rect x="849" y="707" width="29" height="14.5" fill="#8f8e8a" stroke="#222" stroke-width="0.8"/><path d="M856,707v14.5M870,707v14.5" stroke="#333" stroke-width="0.7"/>
<rect x="846" y="721.5" width="32" height="6.5" fill="#cfcecb" stroke="#333" stroke-width="0.7"/>
<rect x="844" y="727.7" width="34" height="6.2" rx="2" fill="#dddcd8" stroke="#222" stroke-width="0.8"/>
<rect x="846" y="737" width="28" height="12" fill="#6b6a65" stroke="#222" stroke-width="0.8"/><path d="M853,737v12M867,737v12" stroke="#222" stroke-width="0.7"/>
<rect x="850" y="733.9" width="20" height="3.1" fill="#9a9995"/>
<path d="M849,749 L849,815 Q849,832 838,850 L806,898 Q800,908 808,912.5 Q817,917 823,908 L858,852 Q871,832 871,812 L871,745Z" fill="#bcbbb7" stroke="#1a1a1a" stroke-width="1.1"/>
<path d="M856,801 Q859,797 862,801 L866,818 Q866,832 856,848 L830,890 Q826,895 823,891 Q821,888 824,884 L850,843 Q858,830 858,818Z" fill="#fff" stroke="#1a1a1a" stroke-width="0.9"/>
<circle cx="813.3" cy="906.2" r="2.6" fill="#fff" stroke="#1a1a1a" stroke-width="0.9"/>
<g transform="translate(856.2,836.2)"><circle r="12" fill="#1c1c1c"/><circle r="9" fill="#3a3a39" stroke="#000" stroke-width="0.8"/><text transform="rotate(80)" x="0" y="2.5" font-family="Liberation Sans,Arial,sans-serif" font-weight="bold" font-size="6.5" text-anchor="middle" fill="#0a0a0a">10.9</text></g>
</g>
<rect x="323" y="442" width="6.5" height="49" fill="#8d8c88" stroke="#222" stroke-width="0.8"/><path d="M323,466.5h6" stroke="#333" stroke-width="0.8"/>
<path d="M328.5,410 Q328.5,376 350,354 L462,252 L463.4,232 Q464,225 467,223.5 L517,177.5 Q519.5,175.5 522,177 L552,200 L552,732 L521.5,734 L521,762 Q521,766 517,766 L499,766 Q488,763 486.4,750 L485,733 L352,598 Q328.5,574 328.5,545 Z" fill="url(#gPlate)" stroke="#111" stroke-width="0.8"/>
<circle cx="481.6" cy="235.8" r="7.2" fill="#fff" stroke="#000" stroke-width="0.8"/>
<circle cx="355.3" cy="381.9" r="7" fill="#fff" stroke="#000" stroke-width="0.8"/>
<circle cx="354.6" cy="553.8" r="7" fill="#fff" stroke="#000" stroke-width="0.8"/>
<circle cx="503.6" cy="748.3" r="6.6" fill="#fff" stroke="#000" stroke-width="0.8"/>
<circle cx="607" cy="153" r="8.5" fill="#cfcecb" stroke="#444" stroke-width="0.8"/>
<rect x="595" y="784" width="28" height="18" fill="#c4c3bf" stroke="#444" stroke-width="0.8"/>
<path d="M552,204.5 L547.5,202 L524.5,202 L524.5,178 L570,140.5 Q573.2,137.5 576,140 L596,160.5 A143.6,143.6 0 0 1 819,172 Q824,179 830,190 L864,255 L877,276 Q882,284 882,296 L882,636 Q881.7,660 871,681.3 L811.7,794.7 Q800,826.5 772,827 L652,827 L597,779.5 L575,795.5 Q572,798 569,795.5 L524.5,759.5 L524.5,734.5 L547.5,734.5 L552,731 Z" fill="#0b0b0b"/>
<g id="gear">
<defs><path id="gp" d="M611.2,260.3L614.8,260.2L621.6,274.9Q622.5,276.1 623.3,276.1L629.3,276.3Q630.4,276.4 631,275.2L637.1,260.8L640.7,261.2L645.7,276.7Q646.3,278 647.1,278.1L653,279Q654.2,279.2 654.9,278.1L662.7,264.6L666.3,265.4L669.3,281.4Q669.7,282.8 670.5,283L676.3,284.7Q677.4,285 678.2,284L687.7,271.6L691.1,272.8L692.1,289Q692.4,290.5 693.2,290.8L698.6,293.2Q699.7,293.7 700.7,292.8L711.6,281.6L714.8,283.3L713.8,299.5Q713.9,301 714.6,301.4L719.8,304.4Q720.7,305 721.8,304.3L734.1,294.6L737.1,296.6L734,312.6Q733.9,314.1 734.6,314.6L739.3,318.2Q740.2,319 741.3,318.4L754.7,310.3L757.4,312.7L752.4,328.1Q752.1,329.6 752.7,330.1L756.9,334.4Q757.8,335.2 759,334.8L773.3,328.4L775.6,331.1L768.7,345.8Q768.3,347.2 768.8,347.9L772.4,352.6Q773.1,353.6 774.4,353.2L789.4,348.7L791.4,351.7L782.6,365.4Q782.1,366.8 782.5,367.5L785.5,372.6Q786.1,373.7 787.4,373.5L802.8,370.9L804.4,374.1L794,386.6Q793.3,387.9 793.6,388.7L796,394.2Q796.4,395.2 797.7,395.3L813.3,394.6L814.6,398L802.7,409.1Q801.8,410.3 802,411.1L803.7,416.8Q804,417.9 805.3,418.1L820.8,419.4L821.6,423L808.4,432.5Q807.4,433.5 807.5,434.3L808.5,440.3Q808.6,441.4 809.9,441.7L825.2,445L825.5,448.6L811.2,456.4Q810.1,457.3 810.1,458.1L810.3,464.1Q810.3,465.3 811.5,465.8L826.3,470.9L826.1,474.5L811,480.5Q809.7,481.2 809.7,482L809.1,488Q809,489.2 810.1,489.8L824.1,496.8L823.5,500.3L807.8,504.3Q806.4,504.9 806.2,505.7L804.9,511.6Q804.6,512.7 805.7,513.5L818.7,522.1L817.7,525.6L801.5,527.6Q800.1,528 799.9,528.8L797.8,534.4Q797.4,535.5 798.3,536.4L810.2,546.6L808.7,549.9L792.5,549.9Q791,550.1 790.7,550.9L787.9,556.2Q787.4,557.2 788.2,558.2L798.6,569.9L796.8,573L780.7,570.9Q779.2,570.9 778.7,571.6L775.4,576.5Q774.7,577.5 775.4,578.6L784.3,591.4L782.1,594.3L766.3,590.2Q764.9,590.1 764.3,590.7L760.4,595.2Q759.6,596 760.1,597.2L767.3,611.1L764.8,613.6L749.7,607.6Q748.3,607.3 747.6,607.8L743.1,611.8Q742.3,612.5 742.6,613.8L748.1,628.4L745.2,630.6L731,622.8Q729.6,622.3 728.9,622.7L724,626.1Q723,626.7 723.2,628L726.8,643.2L723.7,645.1L710.5,635.5Q709.2,634.8 708.5,635.2L703.2,637.9Q702.1,638.4 702.2,639.7L703.8,655.2L700.5,656.7L688.7,645.5Q687.4,644.7 686.7,645L681,647Q679.9,647.4 679.8,648.7L679.5,664.3L676,665.3L665.7,652.7Q664.6,651.8 663.8,652L657.9,653.2Q656.8,653.5 656.5,654.7L654.2,670.2L650.7,670.8L642,657Q641,655.9 640.2,656L634.2,656.6Q633.1,656.6 632.7,657.9L628.4,672.9L624.8,673L618,658.3Q617.1,657.1 616.3,657.1L610.3,656.9Q609.2,656.8 608.6,658L602.5,672.4L598.9,672L593.9,656.5Q593.3,655.2 592.5,655.1L586.6,654.2Q585.4,654 584.7,655.1L576.9,668.6L573.3,667.8L570.3,651.8Q569.9,650.4 569.1,650.2L563.3,648.5Q562.2,648.2 561.4,649.2L551.9,661.6L548.5,660.4L547.5,644.2Q547.2,642.7 546.4,642.4L541,640Q539.9,639.5 538.9,640.4L528,651.6L524.8,649.9L525.8,633.7Q525.7,632.2 525,631.8L519.8,628.8Q518.9,628.2 517.8,628.9L505.5,638.6L502.5,636.6L505.6,620.6Q505.7,619.1 505,618.6L500.3,615Q499.4,614.2 498.3,614.8L484.9,622.9L482.2,620.5L487.2,605.1Q487.5,603.6 486.9,603.1L482.7,598.8Q481.8,598 480.6,598.4L466.3,604.8L464,602.1L470.9,587.4Q471.3,586 470.8,585.3L467.2,580.6Q466.5,579.6 465.2,580L450.2,584.5L448.2,581.5L457,567.8Q457.5,566.4 457.1,565.7L454.1,560.6Q453.5,559.5 452.2,559.7L436.8,562.3L435.2,559.1L445.6,546.6Q446.3,545.3 446,544.5L443.6,539Q443.2,538 441.9,537.9L426.3,538.6L425,535.2L436.9,524.1Q437.8,522.9 437.6,522.1L435.9,516.4Q435.6,515.3 434.3,515.1L418.8,513.8L418,510.2L431.2,500.7Q432.2,499.7 432.1,498.9L431.1,492.9Q431,491.8 429.7,491.5L414.4,488.2L414.1,484.6L428.4,476.8Q429.5,475.9 429.5,475.1L429.3,469.1Q429.3,467.9 428.1,467.4L413.3,462.3L413.5,458.7L428.6,452.7Q429.9,452 429.9,451.2L430.5,445.2Q430.6,444 429.5,443.4L415.5,436.4L416.1,432.9L431.8,428.9Q433.2,428.3 433.4,427.5L434.7,421.6Q435,420.5 433.9,419.7L420.9,411.1L421.9,407.6L438.1,405.6Q439.5,405.2 439.7,404.4L441.8,398.8Q442.2,397.7 441.3,396.8L429.4,386.6L430.9,383.3L447.1,383.3Q448.6,383.1 448.9,382.3L451.7,377Q452.2,376 451.4,375L441,363.3L442.8,360.2L458.9,362.3Q460.4,362.3 460.9,361.6L464.2,356.7Q464.9,355.7 464.2,354.6L455.3,341.8L457.5,338.9L473.3,343Q474.7,343.1 475.3,342.5L479.2,338Q480,337.2 479.5,336L472.3,322.1L474.8,319.6L489.9,325.6Q491.3,325.9 492,325.4L496.5,321.4Q497.3,320.7 497,319.4L491.5,304.8L494.4,302.6L508.6,310.4Q510,310.9 510.7,310.5L515.6,307.1Q516.6,306.5 516.4,305.2L512.8,290L515.9,288.1L529.1,297.7Q530.4,298.4 531.1,298L536.4,295.3Q537.5,294.8 537.4,293.5L535.8,278L539.1,276.5L550.9,287.7Q552.2,288.5 552.9,288.2L558.6,286.2Q559.7,285.8 559.8,284.5L560.1,268.9L563.6,267.9L573.9,280.5Q575,281.4 575.8,281.2L581.7,280Q582.8,279.7 583.1,278.5L585.4,263L588.9,262.4L597.6,276.2Q598.6,277.3 599.4,277.2L605.4,276.6Q606.5,276.6 606.9,275.3Z"/></defs>
<use href="#gp" fill="#b2b0ac" stroke="#161616" stroke-width="2.8" stroke-linejoin="round"/>
<use href="#gp" fill="none" stroke="#c4c2be" stroke-width="0.8" stroke-linejoin="round"/>
<path d="M613.2,293.5A173.2,173.2 0 0 1 618.1,293.4L618.1,288.8A177.8,177.8 0 0 1 626.5,288.9L626.3,293.5A173.2,173.2 0 0 1 631.3,293.8A173.2,173.2 0 0 1 636.3,294.2L636.7,289.6A177.8,177.8 0 0 1 645,290.6L644.4,295.1A173.2,173.2 0 0 1 649.3,295.9A173.2,173.2 0 0 1 654.2,296.8L655.1,292.3A177.8,177.8 0 0 1 663.3,294.2L662.1,298.7A173.2,173.2 0 0 1 667,299.9A173.2,173.2 0 0 1 671.7,301.4L673.1,297A177.8,177.8 0 0 1 681,299.7L679.5,304A173.2,173.2 0 0 1 684.1,305.8A173.2,173.2 0 0 1 700.6,313.4A173.2,173.2 0 0 1 716.2,322.7A173.2,173.2 0 0 1 730.7,333.5A173.2,173.2 0 0 1 734.5,336.8L737.5,333.3A177.8,177.8 0 0 1 743.6,339L740.4,342.3A173.2,173.2 0 0 1 744,345.9A173.2,173.2 0 0 1 747.4,349.5L750.8,346.4A177.8,177.8 0 0 1 756.3,352.7L752.8,355.6A173.2,173.2 0 0 1 755.9,359.5A173.2,173.2 0 0 1 758.9,363.5L762.6,360.7A177.8,177.8 0 0 1 767.5,367.6L763.6,370.1A173.2,173.2 0 0 1 766.4,374.3A173.2,173.2 0 0 1 769,378.6L772.9,376.2A177.8,177.8 0 0 1 777,383.5L772.9,385.7A173.2,173.2 0 0 1 775.2,390.1A173.2,173.2 0 0 1 777.3,394.6L781.5,392.7A177.8,177.8 0 0 1 784.8,400.4L780.6,402.1A173.2,173.2 0 0 1 782.3,406.8A173.2,173.2 0 0 1 784,411.5L788.4,410A177.8,177.8 0 0 1 790.8,418L786.4,419.3A173.2,173.2 0 0 1 787.7,424.1A173.2,173.2 0 0 1 788.9,429L793.4,428A177.8,177.8 0 0 1 795,436.2L790.4,437A173.2,173.2 0 0 1 791.2,441.9A173.2,173.2 0 0 1 791.9,446.8L796.4,446.3A177.8,177.8 0 0 1 797.2,454.7L792.6,455A173.2,173.2 0 0 1 792.9,460A173.2,173.2 0 0 1 793,464.9L797.6,464.9A177.8,177.8 0 0 1 797.5,473.3L792.9,473.1A173.2,173.2 0 0 1 792.6,478.1A173.2,173.2 0 0 1 792.2,483.1L796.8,483.5A177.8,177.8 0 0 1 795.8,491.8L791.3,491.2A173.2,173.2 0 0 1 790.5,496.1A173.2,173.2 0 0 1 789.6,501L794.1,501.9A177.8,177.8 0 0 1 792.2,510.1L787.7,508.9A173.2,173.2 0 0 1 786.5,513.8A173.2,173.2 0 0 1 785,518.5L789.4,519.9A177.8,177.8 0 0 1 786.7,527.8L782.4,526.3A173.2,173.2 0 0 1 780.6,530.9A173.2,173.2 0 0 1 778.7,535.5L782.9,537.4A177.8,177.8 0 0 1 779.4,545L775.3,542.9A173.2,173.2 0 0 1 773,547.4A173.2,173.2 0 0 1 770.6,551.8L774.6,554A177.8,177.8 0 0 1 770.3,561.2L766.4,558.8A173.2,173.2 0 0 1 763.7,563A173.2,173.2 0 0 1 760.9,567.1L764.6,569.7A177.8,177.8 0 0 1 759.6,576.4L756,573.6A173.2,173.2 0 0 1 752.9,577.5A173.2,173.2 0 0 1 749.6,581.3L753.1,584.3A177.8,177.8 0 0 1 747.4,590.4L744.1,587.2A173.2,173.2 0 0 1 740.5,590.8A173.2,173.2 0 0 1 736.9,594.2L740,597.6A177.8,177.8 0 0 1 733.7,603.1L730.8,599.6A173.2,173.2 0 0 1 726.9,602.7A173.2,173.2 0 0 1 722.9,605.7L725.7,609.4A177.8,177.8 0 0 1 718.8,614.3L716.3,610.4A173.2,173.2 0 0 1 712.1,613.2A173.2,173.2 0 0 1 707.8,615.8L710.2,619.7A177.8,177.8 0 0 1 702.9,623.8L700.7,619.7A173.2,173.2 0 0 1 696.3,622A173.2,173.2 0 0 1 691.8,624.1L693.7,628.3A177.8,177.8 0 0 1 686,631.6L684.3,627.4A173.2,173.2 0 0 1 679.6,629.1A173.2,173.2 0 0 1 674.9,630.8L676.4,635.2A177.8,177.8 0 0 1 668.4,637.6L667.1,633.2A173.2,173.2 0 0 1 662.3,634.5A173.2,173.2 0 0 1 657.4,635.7L658.4,640.2A177.8,177.8 0 0 1 650.2,641.8L649.4,637.2A173.2,173.2 0 0 1 644.5,638A173.2,173.2 0 0 1 639.6,638.7L640.1,643.2A177.8,177.8 0 0 1 631.7,644L631.4,639.4A173.2,173.2 0 0 1 626.4,639.7A173.2,173.2 0 0 1 621.5,639.8L621.5,644.4A177.8,177.8 0 0 1 613.1,644.3L613.3,639.7A173.2,173.2 0 0 1 608.3,639.4A173.2,173.2 0 0 1 603.3,639L602.9,643.6A177.8,177.8 0 0 1 594.6,642.6L595.2,638.1A173.2,173.2 0 0 1 590.3,637.3A173.2,173.2 0 0 1 585.4,636.4L584.5,640.9A177.8,177.8 0 0 1 576.3,639L577.5,634.5A173.2,173.2 0 0 1 572.6,633.3A173.2,173.2 0 0 1 567.9,631.8L566.5,636.2A177.8,177.8 0 0 1 558.6,633.5L560.1,629.2A173.2,173.2 0 0 1 555.5,627.4A173.2,173.2 0 0 1 550.9,625.5L549,629.7A177.8,177.8 0 0 1 541.4,626.2L543.5,622.1A173.2,173.2 0 0 1 539,619.8A173.2,173.2 0 0 1 534.6,617.4L532.4,621.4A177.8,177.8 0 0 1 525.2,617.1L527.6,613.2A173.2,173.2 0 0 1 523.4,610.5A173.2,173.2 0 0 1 519.3,607.7L516.7,611.4A177.8,177.8 0 0 1 510,606.4L512.8,602.8A173.2,173.2 0 0 1 508.9,599.7A173.2,173.2 0 0 1 505.1,596.4L502.1,599.9A177.8,177.8 0 0 1 496,594.2L499.2,590.9A173.2,173.2 0 0 1 495.6,587.3A173.2,173.2 0 0 1 492.2,583.7L488.8,586.8A177.8,177.8 0 0 1 483.3,580.5L486.8,577.6A173.2,173.2 0 0 1 483.7,573.7A173.2,173.2 0 0 1 480.7,569.7L477,572.5A177.8,177.8 0 0 1 472.1,565.6L476,563.1A173.2,173.2 0 0 1 473.2,558.9A173.2,173.2 0 0 1 470.6,554.6L466.7,557A177.8,177.8 0 0 1 462.6,549.7L466.7,547.5A173.2,173.2 0 0 1 464.4,543.1A173.2,173.2 0 0 1 462.3,538.6L458.1,540.5A177.8,177.8 0 0 1 454.8,532.8L459,531.1A173.2,173.2 0 0 1 457.3,526.4A173.2,173.2 0 0 1 455.6,521.7L451.2,523.2A177.8,177.8 0 0 1 448.8,515.2L453.2,513.9A173.2,173.2 0 0 1 451.9,509.1A173.2,173.2 0 0 1 450.7,504.2L446.2,505.2A177.8,177.8 0 0 1 444.6,497L449.2,496.2A173.2,173.2 0 0 1 448.4,491.3A173.2,173.2 0 0 1 446.7,473.2A173.2,173.2 0 0 1 447,455.1A173.2,173.2 0 0 1 449.1,437.1A173.2,173.2 0 0 1 453.1,419.4A173.2,173.2 0 0 1 454.6,414.7L450.2,413.3A177.8,177.8 0 0 1 452.9,405.4L457.2,406.9A173.2,173.2 0 0 1 459,402.3A173.2,173.2 0 0 1 460.9,397.7L456.7,395.8A177.8,177.8 0 0 1 460.2,388.2L464.3,390.3A173.2,173.2 0 0 1 466.6,385.8A173.2,173.2 0 0 1 469,381.4L465,379.2A177.8,177.8 0 0 1 469.3,372L473.2,374.4A173.2,173.2 0 0 1 475.9,370.2A173.2,173.2 0 0 1 478.7,366.1L475,363.5A177.8,177.8 0 0 1 480,356.8L483.6,359.6A173.2,173.2 0 0 1 486.7,355.7A173.2,173.2 0 0 1 490,351.9L486.5,348.9A177.8,177.8 0 0 1 492.2,342.8L495.5,346A173.2,173.2 0 0 1 499.1,342.4A173.2,173.2 0 0 1 502.7,339L499.6,335.6A177.8,177.8 0 0 1 505.9,330.1L508.8,333.6A173.2,173.2 0 0 1 512.7,330.5A173.2,173.2 0 0 1 516.7,327.5L513.9,323.8A177.8,177.8 0 0 1 520.8,318.9L523.3,322.8A173.2,173.2 0 0 1 527.5,320A173.2,173.2 0 0 1 531.8,317.4L529.4,313.5A177.8,177.8 0 0 1 536.7,309.4L538.9,313.5A173.2,173.2 0 0 1 543.3,311.2A173.2,173.2 0 0 1 547.8,309.1L545.9,304.9A177.8,177.8 0 0 1 553.6,301.6L555.3,305.8A173.2,173.2 0 0 1 560,304.1A173.2,173.2 0 0 1 564.7,302.4L563.2,298A177.8,177.8 0 0 1 571.2,295.6L572.5,300A173.2,173.2 0 0 1 577.3,298.7A173.2,173.2 0 0 1 582.2,297.5L581.2,293A177.8,177.8 0 0 1 589.4,291.4L590.2,296A173.2,173.2 0 0 1 595.1,295.2A173.2,173.2 0 0 1 600,294.5L599.5,290A177.8,177.8 0 0 1 607.9,289.2L608.2,293.8A173.2,173.2 0 0 1 613.2,293.5Z" fill="none" stroke="#141414" stroke-width="2.9" stroke-linejoin="round"/>
<circle cx="619.8" cy="466.6" r="129" fill="url(#gDisc)" stroke="#1c1c1c" stroke-width="1"/>
<circle cx="619.8" cy="466.6" r="126.5" fill="none" stroke="#4a4a48" stroke-width="0.7"/>
<circle cx="619.8" cy="466.6" r="26" fill="#c9c8c4" stroke="#1c1c1c" stroke-width="1"/>
<circle cx="619.8" cy="466.6" r="23.5" fill="none" stroke="#555" stroke-width="0.7"/>
<circle cx="619.8" cy="466.6" r="17" fill="#d2d1cd" stroke="#333" stroke-width="0.8"/>
<circle cx="619.8" cy="466.6" r="10" fill="#cfcecb" stroke="#333" stroke-width="0.8"/>
<circle cx="619.8" cy="466.6" r="5" fill="#c4c3c0" stroke="#333" stroke-width="0.8"/>
<use href="#bolt" transform="translate(619.8,360.6) rotate(180)"/>
<use href="#bolt" transform="translate(513.8,466.6) rotate(90)"/>
<use href="#bolt" transform="translate(725.8,466.6) rotate(-90)"/>
<use href="#bolt" transform="translate(619.8,572.6) rotate(0)"/>
</g>
<g id="hoses">
<path d="M858,262 Q885,247 935,244" fill="none" stroke="#0d0d0d" stroke-width="23"/>
<path d="M862,256 Q890,243 935,240" fill="none" stroke="#4a4a4a" stroke-width="2.5" opacity="0.9"/>
<path d="M1303.5,556 L1303.5,672 Q1303.5,686 1289,686 L1254,686 Q1226.5,686 1226.5,714 L1226.5,775" fill="none" stroke="#0e0e0e" stroke-width="23.5" stroke-linejoin="round" stroke-linecap="round"/>
<path d="M1296,691 L1252,691 Q1233,692 1233,712 L1233,770" fill="none" stroke="#3c3c3c" stroke-width="2" opacity="0.8"/>
</g>
<g id="airbox">
<rect x="841.5" y="143.5" width="32" height="14.5" rx="1.5" fill="#0d0d0d"/>
<path d="M845,143.5v14.5M848,143.5v14.5M851,143.5v14.5M854,143.5v14.5M857,143.5v14.5M860,143.5v14.5M863,143.5v14.5M866,143.5v14.5M869,143.5v14.5" stroke="#3a3a3a" stroke-width="0.7"/>
<rect x="872.3" y="118.9" width="37" height="62.8" fill="#b4b3ae" stroke="#2a2a28" stroke-width="0.8"/>
<rect x="872.3" y="118.9" width="30" height="8.5" fill="#bab9b4"/><rect x="872.3" y="168.5" width="30" height="13.2" fill="#a7a6a1"/>
<path d="M872.3,127.4H902M872.3,131.5H890M872.3,168.5H890M872.3,173.5H902" stroke="#2a2a28" stroke-width="0.8"/>
<rect x="872.8" y="132" width="17" height="36" fill="url(#gConn)"/>
<path d="M889.8,131.5 L902,127.5 L902,119.5 L909,122 L909,179 L902,181 L902,173.5 L889.8,168.5Z" fill="#8c8b86" stroke="#1a1a1a" stroke-width="0.8"/>
<path d="M889.8,134 L907,144 L907,141 L895,131Z M889.8,166 L907,156 L907,159 L895,169Z" fill="#c9c8c3" stroke="#1a1a1a" stroke-width="0.7"/>
<rect x="890.5" y="141.5" width="18.5" height="17" fill="#101010"/>
<rect x="897" y="145" width="12" height="8.5" fill="#8f8e89"/><path d="M897,149H909" stroke="#555" stroke-width="0.7"/>
<path d="M889.8,131.5V168.5" stroke="#1a1a1a" stroke-width="0.9"/>
<path d="M922.1,97 Q922.1,95.1 924,95.1 L942.3,95.1 Q944.2,95.1 944.2,97 L944.2,104.7 L922.1,104.7Z" fill="#4d4c48" stroke="#111" stroke-width="0.8"/>
<rect x="927.5" y="95.6" width="11.5" height="8.7" fill="#8f8e89"/><path d="M927.5,95.5v9M939,95.5v9" stroke="#1a1a1a" stroke-width="0.7"/>
<path d="M911.9,110.5 Q935,100 958.3,110 Q950,116 935,116 Q920,116 911.9,110.5Z" fill="#232322" stroke="#0a0a0a" stroke-width="0.7"/>
<path d="M918,106.5H952" stroke="#0a0a0a" stroke-width="0.8"/>
<path d="M908.7,112 Q908.7,109.9 911,109.9 L1057.2,109.9 Q1095.7,110 1095.7,142 L1095.7,283.1 L986.9,283.1 Q908.7,280 908.7,185 Z" fill="url(#gAir)" stroke="#0a0a0a" stroke-width="1"/>
<path d="M909.2,112 Q909.2,110.4 911,110.4 L1057.2,110.4 Q1095.2,110.5 1095.2,142 L1095.2,151.7 L909.2,151.7Z" fill="url(#gAirTop)"/>
<path d="M908.7,151.7H1095.7M1057.2,110V283" stroke="#0a0a0a" stroke-width="1" fill="none"/>
<path d="M1057.7,110.5 Q1095.2,110.5 1095.2,142 L1095.2,283 L1057.7,283Z" fill="#1d1d1d" opacity="0.45"/>
<rect x="966.5" y="283" width="129.5" height="8" fill="#232323"/>
</g>
<g id="coils">
<rect x="1096.5" y="198" width="207" height="486" rx="14" fill="#0b0b0b"/>
<path d="M1129,199V683M1133,199V683" stroke="#000" stroke-width="1.2"/><path d="M1131,199V683" stroke="#1f1f1f" stroke-width="1"/>
<rect x="1137" y="201" width="157" height="481" fill="#0f0f0f"/>
<g transform="translate(0,0)">
<rect x="1138.7" y="210" width="153.5" height="143" rx="8" fill="#161616" stroke="#2d2d2d" stroke-width="0.8"/>
<circle cx="1151" cy="223.3" r="3.6" fill="#858585" stroke="#000" stroke-width="1"/>
<circle cx="1277.4" cy="223.3" r="3.6" fill="#858585" stroke="#000" stroke-width="1"/>
<circle cx="1151" cy="338.6" r="3.6" fill="#858585" stroke="#000" stroke-width="1"/>
<circle cx="1277.4" cy="338.6" r="3.6" fill="#858585" stroke="#000" stroke-width="1"/>
<path d="M1305,300l6,6h-6z" fill="#c83232"/>
<path d="M1308,256 Q1336,258 1336.5,281 Q1336,304 1308,306Z" fill="#353533" stroke="#0a0a0a" stroke-width="0.8"/>
<path d="M1334,274.5h3v12.5h-3z" fill="#0a0a0a"/>
<rect x="1278.8" y="259.5" width="30" height="43.5" fill="url(#gPlug)" stroke="#0a0a0a" stroke-width="0.8"/>
<path d="M1311.5,256v50" stroke="#0a0a0a" stroke-width="1.2"/>
<rect x="1148" y="227.8" width="131.4" height="107" rx="15" fill="#1d1d1d" stroke="#050505" stroke-width="1"/>
<rect x="1150" y="229.5" width="127.4" height="103.6" rx="14" fill="none" stroke="#333" stroke-width="0.8"/>
<rect x="1166.5" y="245.5" width="95.8" height="70.5" rx="5" fill="url(#gCoil)" stroke="#050505" stroke-width="0.9"/>
<rect x="1172.7" y="227.8" width="83.4" height="107" fill="url(#gCoil2)" stroke="#050505" stroke-width="0.9"/>
<path d="M1173.5,246.3H1255.5" stroke="#777" stroke-width="1" opacity="0.8"/><path d="M1173.5,270.5H1255.5" stroke="#555" stroke-width="1.2" opacity="0.6"/><path d="M1173.5,315H1255.5" stroke="#666" stroke-width="0.9" opacity="0.7"/>
<rect x="1128.8" y="266.5" width="35.5" height="29.3" fill="#b4b3af" stroke="#222" stroke-width="0.8"/>
<path d="M1128.8,271.5h35.5M1128.8,290.8h35.5M1147.5,271.5v19.3" stroke="#333" stroke-width="0.8"/>
<rect x="1128.8" y="266.5" width="35.5" height="5" fill="#9c9b97"/><rect x="1128.8" y="290.8" width="35.5" height="5" fill="#8b8a86"/>
<rect x="1154.5" y="278" width="8" height="7" fill="#c8c7c3" stroke="#222" stroke-width="0.8"/>
</g>
<g transform="translate(0,160.6)">
<rect x="1138.7" y="210" width="153.5" height="143" rx="8" fill="#161616" stroke="#2d2d2d" stroke-width="0.8"/>
<circle cx="1151" cy="223.3" r="3.6" fill="#858585" stroke="#000" stroke-width="1"/>
<circle cx="1277.4" cy="223.3" r="3.6" fill="#858585" stroke="#000" stroke-width="1"/>
<circle cx="1151" cy="338.6" r="3.6" fill="#858585" stroke="#000" stroke-width="1"/>
<circle cx="1277.4" cy="338.6" r="3.6" fill="#858585" stroke="#000" stroke-width="1"/>
<path d="M1305,300l6,6h-6z" fill="#c83232"/>
<path d="M1308,256 Q1336,258 1336.5,281 Q1336,304 1308,306Z" fill="#353533" stroke="#0a0a0a" stroke-width="0.8"/>
<path d="M1334,274.5h3v12.5h-3z" fill="#0a0a0a"/>
<rect x="1278.8" y="259.5" width="30" height="43.5" fill="url(#gPlug)" stroke="#0a0a0a" stroke-width="0.8"/>
<path d="M1311.5,256v50" stroke="#0a0a0a" stroke-width="1.2"/>
<rect x="1148" y="227.8" width="131.4" height="107" rx="15" fill="#1d1d1d" stroke="#050505" stroke-width="1"/>
<rect x="1150" y="229.5" width="127.4" height="103.6" rx="14" fill="none" stroke="#333" stroke-width="0.8"/>
<rect x="1166.5" y="245.5" width="95.8" height="70.5" rx="5" fill="url(#gCoil)" stroke="#050505" stroke-width="0.9"/>
<rect x="1172.7" y="227.8" width="83.4" height="107" fill="url(#gCoil2)" stroke="#050505" stroke-width="0.9"/>
<path d="M1173.5,246.3H1255.5" stroke="#777" stroke-width="1" opacity="0.8"/><path d="M1173.5,270.5H1255.5" stroke="#555" stroke-width="1.2" opacity="0.6"/><path d="M1173.5,315H1255.5" stroke="#666" stroke-width="0.9" opacity="0.7"/>
<rect x="1128.8" y="266.5" width="35.5" height="29.3" fill="#b4b3af" stroke="#222" stroke-width="0.8"/>
<path d="M1128.8,271.5h35.5M1128.8,290.8h35.5M1147.5,271.5v19.3" stroke="#333" stroke-width="0.8"/>
<rect x="1128.8" y="266.5" width="35.5" height="5" fill="#9c9b97"/><rect x="1128.8" y="290.8" width="35.5" height="5" fill="#8b8a86"/>
<rect x="1154.5" y="278" width="8" height="7" fill="#c8c7c3" stroke="#222" stroke-width="0.8"/>
</g>
<g transform="translate(0,321.2)">
<rect x="1138.7" y="210" width="153.5" height="143" rx="8" fill="#161616" stroke="#2d2d2d" stroke-width="0.8"/>
<circle cx="1151" cy="223.3" r="3.6" fill="#858585" stroke="#000" stroke-width="1"/>
<circle cx="1277.4" cy="223.3" r="3.6" fill="#858585" stroke="#000" stroke-width="1"/>
<circle cx="1151" cy="338.6" r="3.6" fill="#858585" stroke="#000" stroke-width="1"/>
<circle cx="1277.4" cy="338.6" r="3.6" fill="#858585" stroke="#000" stroke-width="1"/>
<path d="M1304,248l8,10h-8z" fill="#c83232"/>
<path d="M1308,256 Q1336,258 1336.5,281 Q1336,304 1308,306Z" fill="#353533" stroke="#0a0a0a" stroke-width="0.8"/>
<path d="M1334,274.5h3v12.5h-3z" fill="#0a0a0a"/>
<rect x="1278.8" y="259.5" width="30" height="43.5" fill="url(#gPlug)" stroke="#0a0a0a" stroke-width="0.8"/>
<path d="M1311.5,256v50" stroke="#0a0a0a" stroke-width="1.2"/>
<rect x="1148" y="227.8" width="131.4" height="107" rx="15" fill="#1d1d1d" stroke="#050505" stroke-width="1"/>
<rect x="1150" y="229.5" width="127.4" height="103.6" rx="14" fill="none" stroke="#333" stroke-width="0.8"/>
<rect x="1166.5" y="245.5" width="95.8" height="70.5" rx="5" fill="url(#gCoil)" stroke="#050505" stroke-width="0.9"/>
<rect x="1172.7" y="227.8" width="83.4" height="107" fill="url(#gCoil2)" stroke="#050505" stroke-width="0.9"/>
<path d="M1173.5,246.3H1255.5" stroke="#777" stroke-width="1" opacity="0.8"/><path d="M1173.5,270.5H1255.5" stroke="#555" stroke-width="1.2" opacity="0.6"/><path d="M1173.5,315H1255.5" stroke="#666" stroke-width="0.9" opacity="0.7"/>
<rect x="1128.8" y="266.5" width="35.5" height="29.3" fill="#b4b3af" stroke="#222" stroke-width="0.8"/>
<path d="M1128.8,271.5h35.5M1128.8,290.8h35.5M1147.5,271.5v19.3" stroke="#333" stroke-width="0.8"/>
<rect x="1128.8" y="266.5" width="35.5" height="5" fill="#9c9b97"/><rect x="1128.8" y="290.8" width="35.5" height="5" fill="#8b8a86"/>
<rect x="1154.5" y="278" width="8" height="7" fill="#c8c7c3" stroke="#222" stroke-width="0.8"/>
</g>
<use href="#dbolt" transform="translate(1113.5,372.6) rotate(-90) scale(0.75)"/>
<use href="#dbolt" transform="translate(1114.7,511.5) rotate(-90) scale(0.75)"/>
</g>
<g id="pipe">
<path d="M985.5,616 L985.5,715 A171.5,165 0 0 0 1157,880 L1157,815 A112,100 0 0 1 1045,715 L1045,616Z" fill="url(#gPipeE)" stroke="#333" stroke-width="0.9"/>
<rect x="985.5" y="616" width="59.5" height="99" fill="url(#gPipeV)" stroke="#333" stroke-width="0.9"/>
<path d="M985.5,714.5 Q1015,722 1045,714.5" fill="none" stroke="#222" stroke-width="1"/>
<path d="M964.6,612.5h29v9l-3,4h-23l-3-4z" fill="#2a2a29" stroke="#0a0a0a" stroke-width="0.8"/><path d="M972,612.5v13M986,612.5v13" stroke="#111" stroke-width="0.7"/>
<rect x="972.5" y="625.6" width="12.5" height="7.3" fill="#1a1a1a"/>
</g>
<g id="tb">
<path d="M1188.5,739.9 L1188.5,735 L1198,724.5 L1198,719.5 L1259.4,719.5 L1259.4,739.9Z" fill="#4b4a46" stroke="#151515" stroke-width="0.9"/>
<path d="M1198,724.5 L1259,724.5" stroke="#222" stroke-width="0.8"/><rect x="1200.5" y="726" width="14" height="14" fill="#5a5955"/>
<path d="M1237.7,717 Q1237.7,715.3 1240,715.3 L1263,715.3 Q1265.5,715.3 1265.5,718 L1265.5,735.7 L1258,735.7 L1258,739.9 L1237.7,739.9Z" fill="#6c6b65" stroke="#151515" stroke-width="0.9"/>
<path d="M1237.7,721 L1258,721 L1258,735.7" fill="none" stroke="#222" stroke-width="0.8"/><path d="M1240,733.5 L1246,733.5 L1249,729 L1254,733.5" fill="none" stroke="#151515" stroke-width="1.2"/><rect x="1260.5" y="724" width="2" height="5" fill="#222"/>
<rect x="1246.5" y="733.5" width="11" height="6.4" fill="#9c9b95"/>
<rect x="1185.3" y="739.9" width="79.7" height="13.4" rx="1.5" fill="url(#gFl)" stroke="#151515" stroke-width="0.9"/>
<rect x="1186.2" y="753.3" width="14.8" height="12" fill="url(#gStd)" stroke="#333" stroke-width="0.7"/><rect x="1248.8" y="753.3" width="15.7" height="12" fill="url(#gStd)" stroke="#333" stroke-width="0.7"/>
<path d="M1193,753.3v12M1256,753.3v12" stroke="#444" stroke-width="0.7"/>
<path d="M1180.6,769 Q1180.6,765.8 1184,765.8 L1267,765.8 Q1270.4,765.8 1270.4,769 Q1271,778.3 1280,778.3 L1285,778.3 Q1297.9,779 1297.9,792 L1297.9,900 Q1297.9,912.9 1285,912.9 L1280,912.9 Q1271,913 1270.4,922 Q1270.4,925.9 1267,925.9 L1184,925.9 Q1180.6,925.9 1180.6,922 Q1180,913 1171,912.9 L1161,912.9 Q1157.5,912.9 1157.5,909 L1157.5,782 Q1157.5,778.3 1161,778.3 L1171,778.3 Q1180,778 1180.6,769Z" fill="#ebeae6" stroke="#222" stroke-width="1"/>
<path d="M1163,783 L1163,908 M1292.5,792 L1292.5,900" stroke="#444" stroke-width="0.7"/>
<circle cx="1170.5" cy="791.9" r="6.2" fill="#e0dfdb" stroke="#222" stroke-width="0.8"/><circle cx="1170.5" cy="791.9" r="4.2" fill="#1c1c1c"/>
<circle cx="1279.9" cy="791.9" r="6.2" fill="#e0dfdb" stroke="#222" stroke-width="0.8"/><circle cx="1279.9" cy="791.9" r="4.2" fill="#1c1c1c"/>
<circle cx="1170.5" cy="900.7" r="6.2" fill="#e0dfdb" stroke="#222" stroke-width="0.8"/><circle cx="1170.5" cy="900.7" r="4.2" fill="#1c1c1c"/>
<circle cx="1279.9" cy="900.7" r="6.2" fill="#e0dfdb" stroke="#222" stroke-width="0.8"/><circle cx="1279.9" cy="900.7" r="4.2" fill="#1c1c1c"/>
<rect x="1214" y="722" width="23.2" height="55" fill="#121212"/>
<path d="M1214,717.5H1237.2" stroke="#000" stroke-width="0.8"/><path d="M1232,720 L1232,756" stroke="#2e2e2e" stroke-width="2" opacity="0.8"/>
<rect x="1212.2" y="757" width="33.3" height="15.3" rx="1.5" fill="#3b3b39" stroke="#0a0a0a" stroke-width="0.8"/>
<path d="M1215.5,762 L1229,760.5 L1229,768.5 L1215.5,767Z" fill="#141414"/><path d="M1231,757v15" stroke="#0a0a0a" stroke-width="0.8"/><rect x="1234" y="760.5" width="10" height="8.5" fill="#2a2a29" stroke="#0a0a0a" stroke-width="0.7"/>
<rect x="1213.5" y="772.3" width="24" height="4.5" fill="#151515"/>
<path d="M1183,900 L1183,926 L1247,926 L1247,900Z" fill="#d8d7d3" stroke="#333" stroke-width="0.7"/>
<path d="M1160,815 Q1150,846 1160,880" fill="#e4e3de" stroke="#333" stroke-width="0.8"/>
<circle cx="1225.5" cy="846.3" r="65" fill="url(#gSph)" stroke="#222" stroke-width="1"/>
<circle cx="1225.5" cy="846.3" r="31.5" fill="none" stroke="#1a1a1a" stroke-width="1"/><circle cx="1225.5" cy="846.3" r="18" fill="none" stroke="#1a1a1a" stroke-width="1"/>
<rect x="1182" y="927" width="66.7" height="10" fill="#1c1c1c"/>
<rect x="1185" y="937" width="62" height="13" fill="#5c5b58" stroke="#111" stroke-width="0.8"/><path d="M1200,937v13M1214,937v13M1232,937v13" stroke="#111" stroke-width="0.8"/>
<rect x="1182" y="941" width="14" height="8" fill="#8d8c88" stroke="#111" stroke-width="0.7"/>
<rect x="1205" y="950" width="32" height="8" fill="#2a2a29"/><rect x="1208" y="957" width="40" height="10" fill="#161616"/><rect x="1166" y="966" width="60" height="5" fill="#222"/>
<rect x="1250" y="929" width="26" height="21.5" rx="3" fill="#9d9c98" stroke="#222" stroke-width="0.9"/><path d="M1254,929v21M1272,929v21" stroke="#444" stroke-width="0.7"/><rect x="1275" y="928" width="3" height="20" fill="#3a3a3a"/>
<rect x="1168" y="945" width="16" height="3" fill="#333"/><circle cx="1165" cy="946.5" r="4" fill="#3a3a39" stroke="#111" stroke-width="0.8"/>
</g>
<g id="idler">
<circle cx="836.5" cy="604.2" r="14.4" fill="#8d8c88" stroke="#1a1a1a" stroke-width="1"/><circle cx="836.5" cy="604.2" r="9.6" fill="#a9a8a4" stroke="#1a1a1a" stroke-width="1.6" stroke-dasharray="3.2 0.9"/><circle cx="836.5" cy="604.2" r="7.6" fill="#aaa9a5" stroke="#333" stroke-width="0.6"/>
<circle cx="760.5" cy="661.7" r="14.4" fill="#8d8c88" stroke="#1a1a1a" stroke-width="1"/><circle cx="760.5" cy="661.7" r="9.6" fill="#a9a8a4" stroke="#1a1a1a" stroke-width="1.6" stroke-dasharray="3.2 0.9"/><circle cx="760.5" cy="661.7" r="7.6" fill="#aaa9a5" stroke="#333" stroke-width="0.6"/>
<path d="M767.8,584 A45,45 0 0 1 829.8,598.4 L820.4,604.2 A34,34 0 0 0 773.6,593.4 Z" fill="#d3d2ce" stroke="#1a1a1a" stroke-width="1"/>
<path d="M776.4,584.6 A40.5,40.5 0 0 1 822.6,596.2 L819.9,598.4 A37,37 0 0 0 777.7,587.9 Z" fill="#8a8985" stroke="#1a1a1a" stroke-width="0.7"/>
<path d="M750.6,643.1 A46,46 0 0 1 748.4,606.5 L759.7,610.6 A34,34 0 0 0 761.3,637.6 Z" fill="#d3d2ce" stroke="#1a1a1a" stroke-width="1"/>
<path d="M754.8,637.8 A40,40 0 0 1 752.5,613.9 L755.4,614.5 A37,37 0 0 0 757.5,636.7 Z" fill="#9a9995" stroke="#1a1a1a" stroke-width="0.7"/>
<circle cx="763" cy="595" r="5" fill="#9a9995" stroke="#1a1a1a" stroke-width="0.9"/>
<circle cx="791.6" cy="622.2" r="33" fill="url(#gIdl)" stroke="#1a1a1a" stroke-width="1"/>
<circle cx="786.5" cy="617.1" r="20.4" fill="#d5d4d0" stroke="#1a1a1a" stroke-width="1.2"/><circle cx="786.5" cy="617.1" r="18.3" fill="none" stroke="#2a2a2a" stroke-width="0.9"/><circle cx="786.5" cy="617.1" r="16" fill="#e4e3df" stroke="#1a1a1a" stroke-width="1"/><circle cx="786.5" cy="617.1" r="12.5" fill="#a9a8a4" stroke="#151515" stroke-width="2.4"/><circle cx="786.5" cy="617.1" r="3" fill="#c4c3bf" stroke="#333" stroke-width="0.8"/>
</g>
<use href="#bolt" transform="translate(614.6,176.5) rotate(90) scale(0.86)"/>
<use href="#bolt" transform="translate(614.3,756.5) rotate(90) scale(0.86)"/>
<circle cx="593.6" cy="756.5" r="4" fill="#2a2a29" stroke="#3a3a3a" stroke-width="0.6"/>
<path d="M524.6,177.5h23v16l-7,7.5h-10l-6,-7Z" fill="#111" stroke="#3a3a38" stroke-width="0.7"/><circle cx="536.6" cy="189" r="7.5" fill="#1c1c1c" stroke="#4a4a48" stroke-width="0.8"/><circle cx="536.6" cy="189" r="3.2" fill="#8a8985"/>
<path d="M524.5,735.2h23v16l-7,7.5h-10l-6,-7Z" fill="#111" stroke="#3a3a38" stroke-width="0.7"/><circle cx="536.5" cy="746.7" r="7.5" fill="#1c1c1c" stroke="#4a4a48" stroke-width="0.8"/><circle cx="536.5" cy="746.7" r="3.2" fill="#8a8985"/>
<g id="csens" transform="translate(810.3,312.3) rotate(47.7)">
<rect x="-39" y="-32" width="8" height="8" fill="#8c8b87" stroke="#111" stroke-width="0.7"/><rect x="-31" y="-27" width="8" height="8" fill="#9a9995" stroke="#111" stroke-width="0.7"/>
<path d="M5,-32 L12,-38 L28,-38 L28,-20 L5,-20Z" fill="#8f8e8a" stroke="#111" stroke-width="0.8"/><rect x="15" y="-32" width="6" height="5" rx="1" fill="#a3a29e" stroke="#111" stroke-width="0.8"/>
<path d="M-46,-3 L-46,-11 Q-44,-14 -38,-13 L-8,-13 L0,-20 L34,-20 Q40,-20 40,-14 L40,-3Z" fill="#151515" stroke="#000" stroke-width="0.8"/>
<path d="M-40,-9 L-10,-9 L-2,-15 L30,-15" fill="none" stroke="#2e2e2d" stroke-width="1.5"/>
<path d="M-50,3 L50,3 L50,30 L-46,30 Q-50,30 -50,26Z" fill="#e6e5e1" stroke="#222" stroke-width="0.9"/>
<path d="M-18,19 L6,19 L6,31 L-18,31Z" fill="#111"/>
<rect x="27" y="3" width="23" height="38" fill="#e4e3df" stroke="#333" stroke-width="0.8"/>
<path d="M7,3 L27,3 L27,58 Q17,64 7,58Z" fill="url(#gPipeV)" stroke="#333" stroke-width="0.8"/>
<rect x="-50" y="-3.5" width="100" height="7" fill="#f5f4f0" stroke="#222" stroke-width="0.8"/>
<rect x="44" y="-3.5" width="6" height="7" fill="#dddcd8" stroke="#222" stroke-width="0.7"/>
</g>
<use href="#dbolt" transform="translate(772.8,301.6) rotate(75) scale(0.67)"/>
</svg>
<svg id="nav" width="1802" height="971" viewBox="0 0 1802 971" style="position:absolute;left:0;top:0;pointer-events:none">
<defs>
<linearGradient id="vcG" x1="0" y1="0" x2="1" y2="0"><stop offset="0" stop-color="#d9dadb"/><stop offset="0.5" stop-color="#e3e4e5"/><stop offset="1" stop-color="#ececed"/></linearGradient>
<linearGradient id="vcS" x1="0" y1="0" x2="1" y2="0"><stop offset="0" stop-color="#ffffff" stop-opacity="0"/><stop offset="1" stop-color="#8e8e8e" stop-opacity="0.9"/></linearGradient>
<linearGradient id="vcS2" x1="0" y1="0" x2="0" y2="1"><stop offset="0" stop-color="#fff" stop-opacity="0"/><stop offset="1" stop-color="#fff" stop-opacity="1"/></linearGradient>
</defs>
<!-- view cube -->
<rect x="1707" y="120" width="8" height="64" fill="url(#vcS)"/>
<rect x="1706" y="168" width="9" height="17" fill="url(#vcS2)"/>
<rect x="1714.5" y="118.5" width="52" height="52" fill="url(#vcG)" stroke="#7d7d7d" stroke-width="1"/>
<rect x="1724" y="128" width="33" height="33" fill="#dcddde" opacity="0.7"/>
<text transform="translate(1735,145.3) rotate(90) scale(0.7,1)" font-family="Liberation Sans,Arial,sans-serif" font-weight="bold" font-size="15.6" text-anchor="middle" fill="#8e8f90">FRONT</text>
<text transform="translate(1708,120.6) scale(0.78,1)" font-family="Liberation Sans,Arial,sans-serif" font-weight="bold" font-size="14.5" fill="#7a7adf">Z</text>
<text transform="translate(1771.5,127.4) scale(0.66,1)" font-family="Liberation Sans,Arial,sans-serif" font-size="13.4" fill="#77df77">Y</text>
<path d="M1767,123h3" stroke="#77df77" stroke-width="1"/>
<text transform="translate(1715.5,184) scale(0.68,1)" font-family="Liberation Sans,Arial,sans-serif" font-size="14" fill="#f08080">X</text>
<path d="M1719,171v2" stroke="#f08080" stroke-width="1"/>
<!-- nav bar -->
<rect x="725.3" y="943.3" width="238.6" height="23.2" fill="#f3f3f3"/>
<g fill="#777"><path d="M750.5,953.3h5.4l-2.7,3.2zM862.9,953.3h5.4l-2.7,3.2zM893.7,953.3h5.4l-2.7,3.2zM924.6,953.3h5.4l-2.7,3.2zM955.4,953.3h5.4l-2.7,3.2z"/></g>
<!-- orbit -->
<g fill="none" stroke="#555" stroke-width="1.1">
<ellipse cx="736.3" cy="954.7" rx="3.8" ry="8"/>
<path d="M732,949.5 Q744,950 744,954.5 Q743,959 732,960"/>
<path d="M731.5,951.5l-3,3l3,3"/>
</g>
<circle cx="735.8" cy="954.7" r="2.3" fill="#62aae6"/>
<!-- look at -->
<path d="M765,950l5-3.5l1.5,2l5-1.5v3" fill="#cfcfcf" stroke="#666" stroke-width="1"/>
<rect x="763.5" y="950.5" width="14" height="11" fill="#62aae6" stroke="#666" stroke-width="1.2"/>
<rect x="763.5" y="950.5" width="14" height="2.5" fill="#8a8a8a"/>
<!-- hand -->
<path d="M791,955.5 l3,4.5 q1.5,2.5 5,2.5 q3.5,0 4,-3 l1.5,-7 q0,-1.5 -1.2,-1 l-1.3,4 l0.5,-6.5 q-0.5,-1.5 -1.5,0 l-0.8,5.5 l-0.4,-7 q-0.7,-1.5 -1.5,0 l-0.3,7 l-1.2,-5.5 q-0.8,-1.2 -1.5,0 l1.2,8.5 l-3,-3.2 q-1.5,-0.5 -2,0.7z" fill="#f8f8f8" stroke="#8a8a8a" stroke-width="0.9"/>
<!-- zoom -->
<circle cx="818.8" cy="954.9" r="4.2" fill="#d4d4d4" stroke="#666" stroke-width="1.2"/>
<path d="M822,958l4.5,4.5" stroke="#666" stroke-width="1.6"/>
<path d="M826,949h5M828.5,946.5v5M826,953.5h5" stroke="#555" stroke-width="1"/>
<!-- zoom window -->
<rect x="840.5" y="946.2" width="16" height="16.5" fill="none" stroke="#555" stroke-width="1" stroke-dasharray="2.5 1.5"/>
<circle cx="847.5" cy="953.5" r="6.8" fill="#d4d4d4" stroke="#666" stroke-width="1.1"/>
<path d="M853,959l3.5,3.5M856.5,959.5v3h-3" stroke="#555" stroke-width="1.1" fill="none"/>
<!-- display -->
<rect x="874.8" y="948.9" width="14.8" height="10.5" fill="#e4e4e4" stroke="#666" stroke-width="1.2"/>
<rect x="876.8" y="950.9" width="10.8" height="6.5" fill="#9a9a9a"/>
<path d="M881,959.5h2.5v1.5h3v1h-8.5v-1h3z" fill="#666"/>
<!-- grid -->
<rect x="905.7" y="946.8" width="12.8" height="12.7" fill="#fff" stroke="#666" stroke-width="1.2"/>
<path d="M910,946.8v12.7M914.2,946.8v12.7M905.7,951v0h12.8M905.7,955.2h12.8" stroke="#666" stroke-width="1.1" fill="none"/>
<!-- viewports -->
<rect x="936.5" y="947.9" width="15" height="12.8" fill="#ddd" stroke="#666" stroke-width="1.2"/>
<path d="M944,947.9v12.8M936.5,954.3h15" stroke="#666" stroke-width="1.2"/>
<g fill="none" stroke="#999" stroke-width="0.7"><rect x="939" y="950" width="2.5" height="2.5"/><rect x="946.5" y="950" width="2.5" height="2.5"/><rect x="939" y="956.3" width="2.5" height="2.5"/><rect x="946.5" y="956.3" width="2.5" height="2.5"/></g>
</svg>

</body></html>
